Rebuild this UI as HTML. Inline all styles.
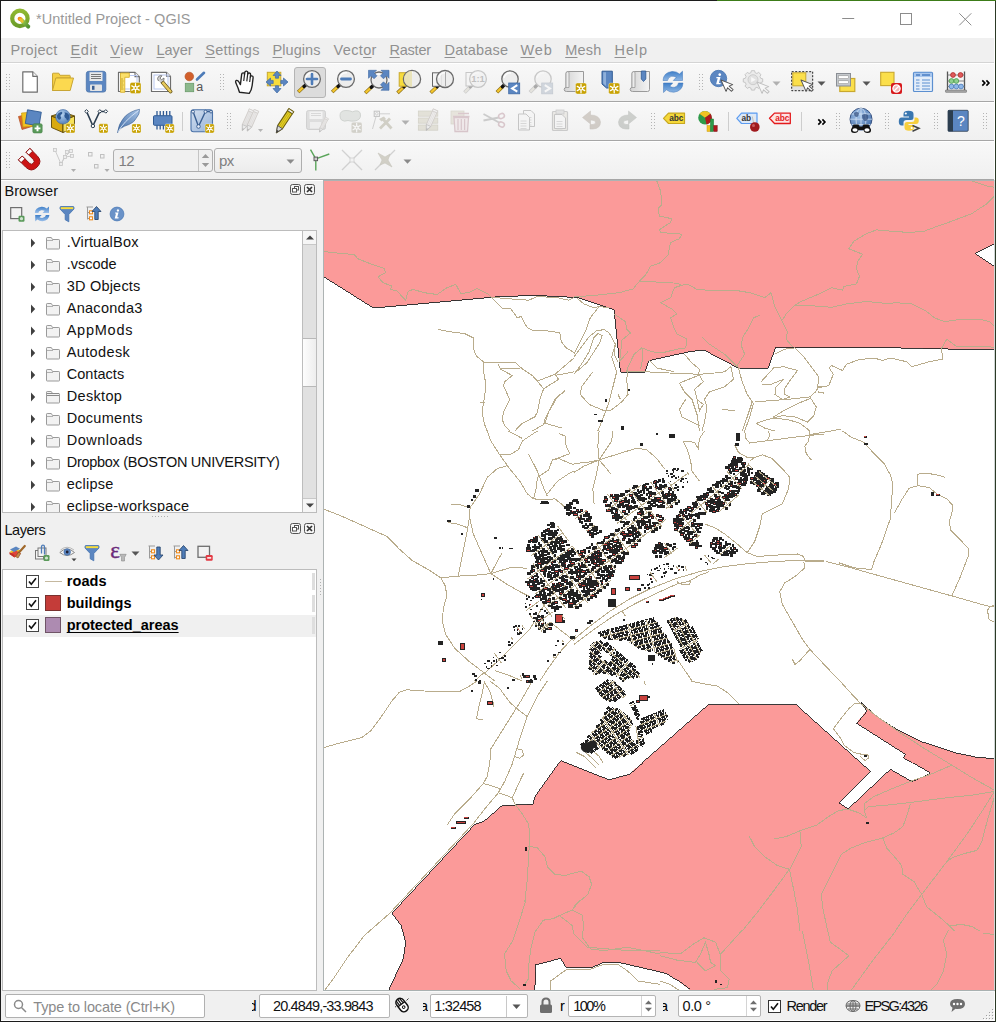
<!DOCTYPE html>
<html><head><meta charset="utf-8"><title>QGIS</title><style>
html,body{margin:0;padding:0}
body{width:996px;height:1022px;overflow:hidden;background:#f0f0f0;position:relative;font-family:"Liberation Sans",sans-serif;font-size:15px;color:#000}
.a{position:absolute}
.t{position:absolute;white-space:nowrap;line-height:1}
svg{position:absolute;overflow:visible}
#title{left:1px;top:1px;width:995px;height:37px;background:#fff}
#menubar{left:1px;top:38px;width:995px;height:24px;background:#f0f0f0}
.m{position:absolute;top:43px;white-space:nowrap;line-height:1;font-size:15.5px;color:#8a8a8a}
.m u{text-decoration-thickness:1px;text-underline-offset:2px}
.tb{position:absolute;left:1px;width:995px;height:38px;background:linear-gradient(#f8f8f8,#f0f0f0)}
.hl{position:absolute;left:1px;width:995px;height:1px}
.white{background:#fff}
.tree{position:absolute;background:#fff;border:1px solid #bcbcbc;box-sizing:border-box}
.bi{position:absolute;left:67px;white-space:nowrap;line-height:1;font-size:15.2px;color:#111}
.sb{position:absolute;background:#fff;border:1px solid #b4b4b4;box-sizing:border-box;border-radius:2px}
</style></head><body>
<div class="a" id="title"></div>
<div class="a" id="menubar"></div>
<div class="tb" style="top:63px;height:38px"></div>
<div class="tb" style="top:103px;height:37px"></div>
<div class="tb" style="top:142px;height:38px"></div>
<div class="hl" style="top:62px;background:#d4d4d4"></div>
<div class="hl white" style="top:63px"></div>
<div class="hl" style="top:101px;background:#a6a6a6"></div>
<div class="hl white" style="top:102px"></div>
<div class="hl" style="top:140px;background:#a6a6a6"></div>
<div class="hl white" style="top:141px"></div>
<div class="hl" style="top:179px;background:#a6a6a6"></div>
<div class="a white" style="left:1px;top:180px;width:322px;height:1px"></div>
<div class="a" style="left:0;top:0;width:717px;height:1px;background:#1c1c1c"></div>
<div class="a" style="left:717px;top:0;width:279px;height:1px;background:#3c7c18"></div>
<div class="a" style="left:0;top:0;width:1px;height:1022px;background:#1c1c1c"></div>
<div class="a" style="left:0;top:1021px;width:996px;height:1px;background:#1c1c1c"></div>
<svg style="left:8px;top:7px" width="24" height="24" viewBox="8 7 24 24">
<defs><linearGradient id="qg" x1="0" y1="0" x2="0" y2="1"><stop offset="0" stop-color="#8fb832"/><stop offset="1" stop-color="#6c9d2a"/></linearGradient>
<linearGradient id="qt" x1="0" y1="0" x2="1" y2="1"><stop offset="0" stop-color="#f0d040"/><stop offset="0.35" stop-color="#93c247"/><stop offset="1" stop-color="#4f9030"/></linearGradient></defs>
<circle cx="19.9" cy="18.4" r="7.700" fill="none" stroke="url(#qg)" stroke-width="4.200"/>
<path d="M20.500 19 L28.200 26.700" stroke="url(#qt)" stroke-width="4" stroke-linecap="round"/>
<circle cx="19.700" cy="18.800" r="2.100" fill="#f08a1c"/>
<path d="M20.200 19.300 L22.500 21.600" stroke="#f0c030" stroke-width="2.200" stroke-linecap="round"/>
</svg>
<div class="t" style="left:36px;top:12.3px;font-size:14.5px;color:#999;font-weight:400;letter-spacing:0.060px;">*Untitled Project - QGIS</div>
<svg style="left:830px;top:1px" width="166" height="37" viewBox="0 0 166 37" fill="none" stroke="#8c8c8c" stroke-width="1"><path d="M12.200 17.500 H24.200"/><rect x="70.500" y="12.500" width="11" height="11"/><path d="M129.300 12.300 L141.300 24.300 M141.300 12.300 L129.300 24.300"/></svg>
<div class="t" style="left:10.5px;top:42.8px;font-size:14.5px;color:#909090;font-weight:400;letter-spacing:0.291px;text-underline-offset:1.5px;">Pro<u>j</u>ect</div>
<div class="t" style="left:70.5px;top:42.8px;font-size:14.5px;color:#909090;font-weight:400;letter-spacing:0.633px;text-underline-offset:1.5px;"><u>E</u>dit</div>
<div class="t" style="left:110.2px;top:42.8px;font-size:14.5px;color:#909090;font-weight:400;letter-spacing:0.571px;text-underline-offset:1.5px;"><u>V</u>iew</div>
<div class="t" style="left:156.5px;top:42.8px;font-size:14.5px;color:#909090;font-weight:400;letter-spacing:-0.024px;text-underline-offset:1.5px;"><u>L</u>ayer</div>
<div class="t" style="left:205.2px;top:42.8px;font-size:14.5px;color:#909090;font-weight:400;letter-spacing:0.256px;text-underline-offset:1.5px;"><u>S</u>ettings</div>
<div class="t" style="left:272.5px;top:42.8px;font-size:14.5px;color:#909090;font-weight:400;letter-spacing:0.056px;text-underline-offset:1.5px;"><u>P</u>lugins</div>
<div class="t" style="left:333.5px;top:42.8px;font-size:14.5px;color:#909090;font-weight:400;letter-spacing:0.352px;text-underline-offset:1.5px;">Vect<u>o</u>r</div>
<div class="t" style="left:389.5px;top:42.8px;font-size:14.5px;color:#909090;font-weight:400;letter-spacing:-0.227px;text-underline-offset:1.5px;"><u>R</u>aster</div>
<div class="t" style="left:444.5px;top:42.8px;font-size:14.5px;color:#909090;font-weight:400;letter-spacing:0.215px;text-underline-offset:1.5px;"><u>D</u>atabase</div>
<div class="t" style="left:520.5px;top:42.8px;font-size:14.5px;color:#909090;font-weight:400;letter-spacing:0.811px;text-underline-offset:1.5px;"><u>W</u>eb</div>
<div class="t" style="left:565.2px;top:42.8px;font-size:14.5px;color:#909090;font-weight:400;letter-spacing:0.239px;text-underline-offset:1.5px;"><u>M</u>esh</div>
<div class="t" style="left:614.5px;top:42.8px;font-size:14.5px;color:#909090;font-weight:400;letter-spacing:0.919px;text-underline-offset:1.5px;"><u>H</u>elp</div>
<div class="a" style="left:6px;top:74px;width:1px;height:17px;background:repeating-linear-gradient(#b4b4b4 0 1px,transparent 1px 3px)"></div>
<div class="a" style="left:9px;top:74px;width:1px;height:17px;background:repeating-linear-gradient(#b4b4b4 0 1px,transparent 1px 3px)"></div>
<svg style="left:18px;top:70px" width="24" height="24" viewBox="0 0 24 24"><path d="M4.800 1.800 H14.800 L19.300 6.300 V22.200 H4.800Z" fill="#fff" stroke="#6e6e6e" stroke-width="1.200" stroke-linejoin="round"/><path d="M14.800 1.800 V6.300 H19.300" fill="#f4f4f4" stroke="#6e6e6e" stroke-width="1.200" stroke-linejoin="round"/></svg>
<svg style="left:50px;top:70px" width="24" height="24" viewBox="0 0 24 24"><path d="M2.500 20.500 V3.800 Q2.500 3.200 3.100 3.200 H8.800 L10 5.300 H19.500 Q20.200 5.300 20.200 6 V8 H6.500 Z" fill="#f5cf45" stroke="#c8a534" stroke-width="1"/><path d="M2.500 20.500 L5.800 8 H23.500 L20.200 20.500Z" fill="#fcd94f" stroke="#c8a534" stroke-width="1" stroke-linejoin="round"/></svg>
<svg style="left:84px;top:70px" width="24" height="24" viewBox="0 0 24 24"><rect x="2.300" y="1.300" width="19.500" height="20.800" rx="2.500" fill="#5b86c1" stroke="#4a72a8" stroke-width="0.800"/><rect x="5.500" y="2.200" width="13" height="8.800" fill="#e9e9e9"/><path d="M7 4.500 H17 M7 6.500 H17 M7 8.500 H17" stroke="#777" stroke-width="1"/><rect x="6" y="14.500" width="12" height="6.500" rx="0.800" fill="#e4e4e4"/><rect x="8" y="15.800" width="2.500" height="4" fill="#3b5f93"/></svg>
<svg style="left:117px;top:70px" width="24" height="24" viewBox="0 0 24 24"><path d="M1.500 2.300 H18 L22.300 6.600 V21.500 H1.500Z" fill="#fff" stroke="#6e6e6e" stroke-width="1.200" stroke-linejoin="round"/><path d="M18 2.300 V6.600 H22.300" fill="#f0f0f0" stroke="#6e6e6e" stroke-width="1.100"/><rect x="4.500" y="5.500" width="15.500" height="13.500" fill="none" stroke="#b9c8f0" stroke-width="1"/><path d="M3.500 3 H12.300 V7.300 H7.800 V22.300 H3.500Z" fill="#fbe06a" stroke="#d8b02c" stroke-width="0.900"/><path d="M4 9 H6 M4 11 H6.500 M4 13 H6 M4 15 H6.500 M4 17 H6 M4 19 H6.500" stroke="#b8941c" stroke-width="0.800"/><rect x="13" y="12.5" width="11" height="11" rx="1.80" fill="#c8a204" stroke="#fff" stroke-opacity="0.550" stroke-width="0.600"/><path d="M18.50 18.00 L18.50 22.30 M18.50 18.00 L18.50 13.70 M18.50 18.00 L22.22 20.15 M18.50 18.00 L14.78 20.15 M18.50 18.00 L14.78 15.85 M18.50 18.00 L22.22 15.85 " stroke="#fff" stroke-width="1.25" stroke-linecap="round"/><circle cx="18.5" cy="18.0" r="2.10" fill="#fff"/><circle cx="18.5" cy="18.0" r="0.95" fill="#c8a204"/></svg>
<svg style="left:150px;top:70px" width="24" height="24" viewBox="0 0 24 24"><path d="M1.500 2.300 H16.500 L20.500 6.300 V21.500 H1.500Z" fill="#fff" stroke="#6e6e6e" stroke-width="1.200" stroke-linejoin="round"/><path d="M16.500 2.300 V6.300 H20.500" fill="#f0f0f0" stroke="#6e6e6e" stroke-width="1.100"/><rect x="4" y="5" width="14" height="14" fill="none" stroke="#b9c8f0" stroke-width="1"/><path d="M8.500 11 Q6.500 8.500 8.500 6.500 Q10 5.200 12 5.800 L10 8 L11.500 9.800 L14 8 Q14.500 10.500 12.500 12 Q11.500 12.500 10.500 12.400" fill="#cfcfcf" stroke="#777" stroke-width="0.900"/><path d="M11 13 L13.500 11 L22 21 Q22.500 22.500 21 23 Q20 23.300 19.300 22.500Z" fill="#e6c85a" stroke="#6b5a20" stroke-width="0.900"/></svg>
<svg style="left:183px;top:70px" width="24" height="24" viewBox="0 0 24 24"><circle cx="6.300" cy="6.500" r="4.300" fill="#d2602c" stroke="#b04c1e" stroke-width="0.600"/><path d="M14 9.500 L21 2.800" stroke="#4e7cb8" stroke-width="2.600" stroke-linecap="round"/><rect x="2.300" y="13.300" width="8.400" height="8.400" fill="#8cb88c" stroke="#6a9c6a" stroke-width="0.800"/><text x="13.200" y="21.300" font-family="Liberation Sans" font-size="12.500" fill="#555">a</text></svg>
<div class="a" style="left:220px;top:74px;width:1px;height:17px;background:repeating-linear-gradient(#b4b4b4 0 1px,transparent 1px 3px)"></div>
<div class="a" style="left:223px;top:74px;width:1px;height:17px;background:repeating-linear-gradient(#b4b4b4 0 1px,transparent 1px 3px)"></div>
<svg style="left:232.5px;top:69.5px" width="24" height="24" viewBox="0 0 24 24"><g transform="translate(12 12) rotate(7) scale(1.06) translate(-11.500 -12.300)"><path d="M7.500 22.500 Q6 19 3.500 15 Q2 12.500 3.200 11.800 Q4.600 11.200 6 13.200 L7.500 15.300 V5.500 Q7.500 4 8.900 4 Q10.200 4 10.200 5.500 V3.500 Q10.200 2 11.700 2 Q13.100 2 13.100 3.500 V4.800 Q13.100 3.400 14.500 3.400 Q15.900 3.400 15.900 4.900 V7 Q15.900 5.800 17.200 5.800 Q18.600 5.800 18.600 7.300 V15 Q18.600 19 16.800 22.500Z" fill="#fff" stroke="#222" stroke-width="1.300" stroke-linejoin="round"/><path d="M10.200 5.500 V11.500 M13.100 4.800 V11.500 M15.900 7 V11.800" stroke="#222" stroke-width="1.100" fill="none"/></g></svg>
<svg style="left:265px;top:70px" width="24" height="24" viewBox="0 0 24 24"><rect x="2.300" y="2.300" width="13.500" height="13.500" fill="#f7dc3c" stroke="#c9a82e" stroke-width="1"/><g fill="#5b86c1" stroke="#3f6aa5" stroke-width="0.700" stroke-linejoin="round"><path d="M12 1 L16 5.500 H13.600 V8.200 H10.400 V5.500 H8Z"/><path d="M12 23 L16 18.500 H13.600 V15.800 H10.400 V18.500 H8Z"/><path d="M1 12 L5.500 8 V10.400 H8.200 V13.600 H5.500 V16Z"/><path d="M23 12 L18.500 8 V10.400 H15.800 V13.600 H18.500 V16Z"/></g></svg>
<div class="a" style="left:294px;top:67px;width:32px;height:31px;box-sizing:border-box;background:#dcdcdc;border:1px solid #b4b4b4;border-radius:3px"></div>
<svg style="left:296.3px;top:65.4px" width="32" height="32" viewBox="0 0 32 32"><path d="M8.0 21.5 L2.2 27.0" stroke="#8a6d14" stroke-width="3.600" stroke-linecap="butt"/><path d="M8.0 21.5 L2.6 26.6" stroke="#f4c62e" stroke-width="2.300" stroke-linecap="butt"/><path d="M9.7 20.0 L8.0 21.5" stroke="#111" stroke-width="3.400" stroke-linecap="round"/><circle cx="16.0" cy="14.0" r="8.4" fill="#ececec" fill-opacity="0.920" stroke="#6a6a6a" stroke-width="1.300"/><path d="M9.8 13.0 A6.2 6.2 0 0 1 17.0 7.8" fill="none" stroke="#fff" stroke-width="1.600" opacity="0.800"/><path d="M11.0 14.0 H21.0 M16.0 9.0 V19.0" stroke="#4e7cb8" stroke-width="2.600" stroke-linecap="round"/></svg>
<svg style="left:329.5px;top:65.4px" width="32" height="32" viewBox="0 0 32 32"><path d="M8.0 21.5 L2.2 27.0" stroke="#8a6d14" stroke-width="3.600" stroke-linecap="butt"/><path d="M8.0 21.5 L2.6 26.6" stroke="#f4c62e" stroke-width="2.300" stroke-linecap="butt"/><path d="M9.7 20.0 L8.0 21.5" stroke="#111" stroke-width="3.400" stroke-linecap="round"/><circle cx="16.0" cy="14.0" r="8.4" fill="#ececec" fill-opacity="0.920" stroke="#6a6a6a" stroke-width="1.300"/><path d="M9.8 13.0 A6.2 6.2 0 0 1 17.0 7.8" fill="none" stroke="#fff" stroke-width="1.600" opacity="0.800"/><path d="M11.5 14.0 H20.5" stroke="#4e7cb8" stroke-width="2.800" stroke-linecap="round"/></svg>
<svg style="left:362.6px;top:65.7px" width="32" height="32" viewBox="0 0 32 32"><path d="M8.3 21.3 L2.2 27.0" stroke="#8a6d14" stroke-width="3.600" stroke-linecap="butt"/><path d="M8.3 21.3 L2.6 26.6" stroke="#f4c62e" stroke-width="2.300" stroke-linecap="butt"/><path d="M10.0 19.7 L8.3 21.3" stroke="#111" stroke-width="3.400" stroke-linecap="round"/><circle cx="16.0" cy="14.0" r="8.0" fill="#ececec" fill-opacity="0.920" stroke="#6a6a6a" stroke-width="1.300"/><path d="M10.2 13.0 A5.8 5.8 0 0 1 17.0 8.2" fill="none" stroke="#fff" stroke-width="1.600" opacity="0.800"/><g fill="#5b86c1" stroke="#3f6aa5" stroke-width="0.600" stroke-linejoin="round"><path d="M5.5 4.3 h8 l-2.500 2.500 l3 3 l-3 3 l-3 -3 l-2.500 2.500z"/><path d="M26.0 4.3 h-8 l2.500 2.500 l-3 3 l3 3 l3 -3 l2.500 2.500z"/><path d="M26.0 24.3 h-8 l2.500 -2.500 l-3 -3 l3 -3 l3 3 l2.500 -2.500z"/></g></svg>
<svg style="left:396.3px;top:64.6px" width="32" height="32" viewBox="0 0 32 32"><path d="M7.9 21.8 L1.5 27.9" stroke="#8a6d14" stroke-width="3.600" stroke-linecap="butt"/><path d="M7.9 21.8 L1.9 27.5" stroke="#f4c62e" stroke-width="2.300" stroke-linecap="butt"/><path d="M9.6 20.2 L7.9 21.8" stroke="#111" stroke-width="3.400" stroke-linecap="round"/><rect x="3.2" y="7.7" width="9" height="13.500" fill="#f7dc3c" stroke="#c9a82e" stroke-width="1"/><circle cx="16.0" cy="14.0" r="8.6" fill="#ececec" fill-opacity="0.920" stroke="#6a6a6a" stroke-width="1.300"/><path d="M9.6 13.0 A6.4 6.4 0 0 1 17.0 7.6" fill="none" stroke="#fff" stroke-width="1.600" opacity="0.800"/><path d="M16.0 6.0 A8 8 0 0 0 16.0 22.0 Z" fill="#e8e0b0" opacity="0.850"/></svg>
<svg style="left:429.2px;top:64.7px" width="32" height="32" viewBox="0 0 32 32"><path d="M8.0 21.7 L1.7 27.8" stroke="#8a6d14" stroke-width="3.600" stroke-linecap="butt"/><path d="M8.0 21.7 L2.1 27.4" stroke="#f4c62e" stroke-width="2.300" stroke-linecap="butt"/><path d="M9.7 20.1 L8.0 21.7" stroke="#111" stroke-width="3.400" stroke-linecap="round"/><rect x="3.5" y="7.8" width="9" height="13.500" fill="#f4f4f4" stroke="#666" stroke-width="1"/><circle cx="16.0" cy="14.0" r="8.5" fill="#ececec" fill-opacity="0.920" stroke="#6a6a6a" stroke-width="1.300"/><path d="M9.7 13.0 A6.3 6.3 0 0 1 17.0 7.7" fill="none" stroke="#fff" stroke-width="1.600" opacity="0.800"/><path d="M16.5 7.0 V21.0" stroke="#aaa" stroke-width="1"/></svg>
<svg style="left:461.5px;top:65px" width="32" height="32" viewBox="0 0 32 32" opacity="0.32"><path d="M8.2 21.8 L2.5 27.5" stroke="#777" stroke-width="3.600" stroke-linecap="butt"/><path d="M8.2 21.8 L2.9 27.1" stroke="#c8c4b4" stroke-width="2.300" stroke-linecap="butt"/><path d="M9.8 20.2 L8.2 21.8" stroke="#111" stroke-width="3.400" stroke-linecap="round"/><rect x="4.0" y="7.5" width="9" height="13.500" fill="#f4f4f4" stroke="#666" stroke-width="1"/><circle cx="16.0" cy="14.0" r="8.4" fill="#ececec" fill-opacity="0.920" stroke="#6a6a6a" stroke-width="1.300"/><path d="M9.8 13.0 A6.2 6.2 0 0 1 17.0 7.8" fill="none" stroke="#fff" stroke-width="1.600" opacity="0.800"/><text x="16.0" y="17.4" font-family="Liberation Sans" font-weight="700" font-size="9.500" fill="#555" text-anchor="middle">1:1</text></svg>
<svg style="left:494.3px;top:65px" width="32" height="32" viewBox="0 0 32 32"><path d="M8.4 21.7 L2.9 27.3" stroke="#8a6d14" stroke-width="3.600" stroke-linecap="butt"/><path d="M8.4 21.7 L3.3 26.9" stroke="#f4c62e" stroke-width="2.300" stroke-linecap="butt"/><path d="M10.0 20.1 L8.4 21.7" stroke="#111" stroke-width="3.400" stroke-linecap="round"/><circle cx="16.0" cy="14.0" r="8.2" fill="#ececec" fill-opacity="0.920" stroke="#6a6a6a" stroke-width="1.300"/><path d="M10.0 13.0 A6.0 6.0 0 0 1 17.0 8.0" fill="none" stroke="#fff" stroke-width="1.600" opacity="0.800"/><rect x="14.7" y="18.0" width="11" height="10.800" fill="#5b86c1" stroke="#3f6aa5" stroke-width="0.800"/><path d="M23.3 20.2 l-5.200 3.200 l5.200 3.200" fill="none" stroke="#fff" stroke-width="2"/></svg>
<svg style="left:527.3px;top:65px" width="32" height="32" viewBox="0 0 32 32" opacity="0.32"><path d="M8.4 21.7 L2.9 27.3" stroke="#777" stroke-width="3.600" stroke-linecap="butt"/><path d="M8.4 21.7 L3.3 26.9" stroke="#c8c4b4" stroke-width="2.300" stroke-linecap="butt"/><path d="M10.0 20.1 L8.4 21.7" stroke="#111" stroke-width="3.400" stroke-linecap="round"/><circle cx="16.0" cy="14.0" r="8.2" fill="#ececec" fill-opacity="0.920" stroke="#6a6a6a" stroke-width="1.300"/><path d="M10.0 13.0 A6.0 6.0 0 0 1 17.0 8.0" fill="none" stroke="#fff" stroke-width="1.600" opacity="0.800"/><rect x="14.7" y="18.0" width="11" height="10.800" fill="#8a9ab0" stroke="#6a7a90" stroke-width="0.800"/><path d="M17.8 20.2 l5.200 3.200 l-5.200 3.200" fill="none" stroke="#fff" stroke-width="2"/></svg>
<svg style="left:563px;top:69.5px" width="24" height="24" viewBox="0 0 24 24"><defs><linearGradient id="sg1" x1="0" x2="1"><stop offset="0" stop-color="#d4d4d4"/><stop offset="1" stop-color="#f4f4f4"/></linearGradient></defs><path d="M5 1.500 H20.500 V19.500 Q20.500 21.500 18.500 21.500 H3.500 Q1.200 21.500 1.200 19.500 Q1.200 17.500 3 17.500 V3.500 Q3 1.500 5 1.500Z" fill="url(#sg1)" stroke="#9a9a9a" stroke-width="1"/><path d="M5 1.500 Q3 1.500 3 3.500 V17.500 H6 V3 Q6 1.500 5 1.500Z" fill="#ececec" stroke="#9a9a9a" stroke-width="0.800"/><rect x="12.5" y="13" width="11" height="11" rx="1.80" fill="#c8a204" stroke="#fff" stroke-opacity="0.550" stroke-width="0.600"/><path d="M18.00 18.50 L18.00 22.80 M18.00 18.50 L18.00 14.20 M18.00 18.50 L21.72 20.65 M18.00 18.50 L14.28 20.65 M18.00 18.50 L14.28 16.35 M18.00 18.50 L21.72 16.35 " stroke="#fff" stroke-width="1.25" stroke-linecap="round"/><circle cx="18.0" cy="18.5" r="2.10" fill="#fff"/><circle cx="18.0" cy="18.5" r="0.95" fill="#c8a204"/></svg>
<svg style="left:596px;top:69.5px" width="24" height="24" viewBox="0 0 24 24"><path d="M6 1.200 H16.300 V18 H10.500 L6 14Z" fill="#5b86c1" stroke="#2f5a94" stroke-width="1"/><path d="M7.200 2.300 H10 V16 L7.200 13.500Z" fill="#8fb0da"/><rect x="12.7" y="13" width="11" height="11" rx="1.80" fill="#c8a204" stroke="#fff" stroke-opacity="0.550" stroke-width="0.600"/><path d="M18.20 18.50 L18.20 22.80 M18.20 18.50 L18.20 14.20 M18.20 18.50 L21.92 20.65 M18.20 18.50 L14.48 20.65 M18.20 18.50 L14.48 16.35 M18.20 18.50 L21.92 16.35 " stroke="#fff" stroke-width="1.25" stroke-linecap="round"/><circle cx="18.2" cy="18.5" r="2.10" fill="#fff"/><circle cx="18.2" cy="18.5" r="0.95" fill="#c8a204"/></svg>
<svg style="left:629px;top:69.5px" width="24" height="24" viewBox="0 0 24 24"><defs><linearGradient id="sg2" x1="0" x2="1"><stop offset="0" stop-color="#d4d4d4"/><stop offset="1" stop-color="#f4f4f4"/></linearGradient></defs><path d="M5 1.500 H20.500 V19.500 Q20.500 21.500 18.500 21.500 H3.500 Q1.200 21.500 1.200 19.500 Q1.200 17.500 3 17.500 V3.500 Q3 1.500 5 1.500Z" fill="url(#sg2)" stroke="#9a9a9a" stroke-width="1"/><path d="M5 1.500 Q3 1.500 3 3.500 V17.500 H6 V3 Q6 1.500 5 1.500Z" fill="#ececec" stroke="#9a9a9a" stroke-width="0.800"/><path d="M12.300 1 H16.800 V9 L14.500 11.500 L12.300 9Z" fill="#5b86c1" stroke="#2f5a94" stroke-width="0.800"/></svg>
<svg style="left:661px;top:70px" width="24" height="24" viewBox="0 0 24 24"><defs><linearGradient id="rf" x1="0" y1="0" x2="0" y2="1"><stop offset="0" stop-color="#3f7fc8"/><stop offset="1" stop-color="#8db6e4"/></linearGradient></defs><path d="M2 10.500 Q2.500 2.500 11 1.500 Q15.500 1.200 18.500 4 L21.500 1.200 V10.500 H12.300 L15.300 7.300 Q13 5.800 10.500 6.300 Q7 7.200 6.500 10.500Z" fill="url(#rf)" stroke="#3a73b8" stroke-width="0.500"/><path d="M22 13 Q21.500 21 13 22.200 Q8.500 22.500 5.500 19.800 L2.500 22.500 V13 H11.700 L8.700 16.300 Q11 17.800 13.500 17.300 Q17 16.500 17.500 13Z" fill="url(#rf)" stroke="#3a73b8" stroke-width="0.500"/></svg>
<div class="a" style="left:699px;top:74px;width:1px;height:17px;background:repeating-linear-gradient(#b4b4b4 0 1px,transparent 1px 3px)"></div>
<div class="a" style="left:702px;top:74px;width:1px;height:17px;background:repeating-linear-gradient(#b4b4b4 0 1px,transparent 1px 3px)"></div>
<svg style="left:710px;top:70px" width="24" height="24" viewBox="0 0 24 24"><circle cx="8.500" cy="8.500" r="8.200" fill="#5b86c1" stroke="#4372b0" stroke-width="0.800"/><path d="M9.800 3.200 a1.400 1.400 0 1 1 -0.100 0z M6.500 7 h4 l-1.600 6 h1.800 l-0.300 1.300 h-4.300 l1.600 -6 h-1.500z" fill="#fff"/><g transform="translate(11 10) rotate(-24) scale(0.86) translate(-11 -10)"><path d="M11 10 v14.500 l3.300 -3.100 l2.600 5.600 l2.400 -1.100 l-2.600 -5.500 h4.600z" fill="#fff" stroke="#555" stroke-width="1.100" stroke-linejoin="round"/></g></svg>
<svg style="left:744px;top:70px" width="24" height="24" viewBox="0 0 24 24" opacity="0.32"><g transform="translate(9 9.700)"><path d="M-1.600 -9 h3.200 l0.500 2 l1.800 0.800 l1.800 -1.100 l2.300 2.300 l-1.100 1.800 l0.800 1.800 l2 0.500 v3.200 l-2 0.500 l-0.800 1.800 l1.100 1.800 l-2.300 2.300 l-1.800 -1.100 l-1.800 0.800 l-0.500 2 h-3.200 l-0.500 -2 l-1.800 -0.800 l-1.800 1.100 l-2.300 -2.300 l1.100 -1.800 l-0.800 -1.800 l-2 -0.500 v-3.200 l2 -0.500 l0.800 -1.800 l-1.100 -1.800 l2.300 -2.300 l1.800 1.100 l1.800 -0.800z" fill="#d8d8d8" stroke="#666" stroke-width="1"/><circle r="5" fill="#bbb" stroke="#666" stroke-width="0.800"/><path d="M-1.800 -2.600 L2.800 0 L-1.800 2.600Z" fill="#fff"/></g><g transform="translate(13 12) rotate(-24) scale(0.86) translate(-13 -12)"><path d="M13 12 v14.500 l3.300 -3.100 l2.600 5.600 l2.400 -1.100 l-2.600 -5.500 h4.600z" fill="#fff" stroke="#555" stroke-width="1.100" stroke-linejoin="round"/></g></svg>
<svg style="left:772.3px;top:80.5px" width="9" height="5" viewBox="0 0 9 5"><path d="M0.500 0.500 H8.500 L4.500 4.800Z" fill="#b0b0b0"/></svg>
<svg style="left:789.5px;top:70px" width="24" height="24" viewBox="0 0 24 24"><rect x="1.700" y="1.700" width="21" height="19" fill="#e2e2e2" stroke="#222" stroke-width="1" stroke-dasharray="2 1.500"/><rect x="2.800" y="2.800" width="13" height="13" fill="#fbdf4b" stroke="#c9a82e" stroke-width="1"/><g transform="translate(11 10) rotate(-24) scale(0.86) translate(-11 -10)"><path d="M11 10 v14.500 l3.300 -3.100 l2.600 5.600 l2.400 -1.100 l-2.600 -5.500 h4.600z" fill="#fff" stroke="#555" stroke-width="1.100" stroke-linejoin="round"/></g></svg>
<svg style="left:817.3px;top:80.5px" width="9" height="5" viewBox="0 0 9 5"><path d="M0.500 0.500 H8.500 L4.500 4.800Z" fill="#555"/></svg>
<svg style="left:834px;top:70px" width="24" height="24" viewBox="0 0 24 24"><rect x="5.800" y="8.500" width="15" height="13" fill="#fbdf4b" stroke="#c9a82e" stroke-width="1.200"/><rect x="2.500" y="3.500" width="14" height="12.500" fill="#c4c8cc" stroke="#8a8e94" stroke-width="1"/><rect x="4.500" y="5.800" width="10" height="2.800" fill="#fff" stroke="#888" stroke-width="0.500"/><rect x="4.500" y="10.800" width="10" height="2.800" fill="#fff" stroke="#888" stroke-width="0.500"/></svg>
<svg style="left:862.3px;top:80.5px" width="9" height="5" viewBox="0 0 9 5"><path d="M0.500 0.500 H8.500 L4.500 4.800Z" fill="#555"/></svg>
<svg style="left:879px;top:70px" width="24" height="24" viewBox="0 0 24 24"><rect x="1.700" y="2.300" width="13.300" height="13.300" fill="#fbdf4b" stroke="#c9a82e" stroke-width="1.100"/><rect x="12" y="13" width="11" height="11" rx="2" fill="#d7191c"/><circle cx="17.500" cy="18.500" r="3.600" fill="#f4b6b6" stroke="#fff" stroke-width="1.300"/><path d="M15 21 L20 16" stroke="#fff" stroke-width="1.300"/></svg>
<svg style="left:911px;top:70px" width="24" height="24" viewBox="0 0 24 24"><rect x="2.500" y="2.300" width="19" height="19.200" rx="1" fill="#e3edf9" stroke="#5b8fd0" stroke-width="1.200"/><rect x="3" y="2.800" width="18" height="4.200" fill="#a9c7ee"/><path d="M5 5 H9 M11 5 H19" stroke="#4a7fc4" stroke-width="1.600"/><path d="M5 10 H8.500 M11 10 H19 M5 13 H8.500 M11 13 H19 M5 16 H8.500 M11 16 H19 M5 19 H8.500 M11 19 H19" stroke="#5b8fd0" stroke-width="1"/></svg>
<svg style="left:944px;top:70px" width="24" height="24" viewBox="0 0 24 24"><path d="M3.500 1.500 V20 M20.500 1.500 V20" stroke="#555" stroke-width="1.300"/><path d="M3.500 5 H20.500 M3.500 11 H20.500 M3.500 16.500 H20.500" stroke="#777" stroke-width="0.900"/><rect x="1.500" y="20" width="21" height="2.300" rx="0.500" fill="#aaa" stroke="#666" stroke-width="0.600"/><g stroke-width="0.800"><circle cx="9" cy="5" r="2.400" fill="#e05a5a" stroke="#b02a2a"/><circle cx="16.500" cy="5" r="2.400" fill="#e05a5a" stroke="#b02a2a"/><circle cx="7.500" cy="11" r="2.400" fill="#8fd08f" stroke="#4a9a4a"/><circle cx="12.300" cy="11" r="2.400" fill="#8fd08f" stroke="#4a9a4a"/><circle cx="7.500" cy="16.500" r="2.400" fill="#8fb8e8" stroke="#4a7ab8"/><circle cx="12.300" cy="16.500" r="2.400" fill="#8fb8e8" stroke="#4a7ab8"/><circle cx="17" cy="16.500" r="2.400" fill="#8fb8e8" stroke="#4a7ab8"/></g></svg>
<svg style="left:981.3px;top:78.5px" width="10" height="8" viewBox="0 0 10 8" fill="none" stroke-linejoin="miter"><path d="M1.300 1.400 L3.800 4 L1.300 6.600 M5.400 1.400 L7.900 4 L5.400 6.600" stroke="#fff" stroke-width="3.200" opacity="0.800"/><path d="M1.300 1.400 L3.800 4 L1.300 6.600 M5.400 1.400 L7.900 4 L5.400 6.600" stroke="#000" stroke-width="1.700"/></svg>
<div class="a" style="left:6px;top:113px;width:1px;height:17px;background:repeating-linear-gradient(#b4b4b4 0 1px,transparent 1px 3px)"></div>
<div class="a" style="left:9px;top:113px;width:1px;height:17px;background:repeating-linear-gradient(#b4b4b4 0 1px,transparent 1px 3px)"></div>
<svg style="left:18px;top:109px" width="24" height="24" viewBox="0 0 24 24"><path d="M0.500 7.500 L12 4.500 L15.500 17 L4 20.500Z" fill="#d9662c" stroke="#b04c1e" stroke-width="0.700"/><path d="M3.500 4 L16 3 L17 17 L5 18Z" fill="#f2c322" stroke="#c99a10" stroke-width="0.700"/><path d="M9.500 0.800 L23.300 3.200 L21 17 L7.300 14.500Z" fill="#5b86c1" stroke="#2f5a94" stroke-width="0.900"/><rect x="14.800" y="14.700" width="9.400" height="9.300" rx="1.500" fill="#5a9a5a" stroke="#3f7a3f" stroke-width="0.500"/><path d="M19.500 16.500 V22.200 M16.600 19.350 H22.400" stroke="#fff" stroke-width="1.900"/></svg>
<svg style="left:51px;top:109px" width="24" height="24" viewBox="0 0 24 24"><defs><radialGradient id="gl" cx="40%" cy="35%" r="70%"><stop offset="0" stop-color="#b8d4f0"/><stop offset="1" stop-color="#4e7cb8"/></radialGradient></defs><path d="M0.500 7 L12 11.500 V23.500 L0.500 18.500Z" fill="#d9aa10" stroke="#5a4608" stroke-width="0.900" stroke-linejoin="round"/><path d="M12 11.500 L23.500 7 V18.500 L12 23.500Z" fill="#f7e25a" stroke="#5a4608" stroke-width="0.900" stroke-linejoin="round"/><path d="M0.500 7 L12 3 L23.500 7 L12 11.500Z" fill="#b8900c" stroke="#5a4608" stroke-width="0.900"/><circle cx="12" cy="7.800" r="7.300" fill="url(#gl)" stroke="#3f6aa5" stroke-width="0.600"/><path d="M6 6.500 q1 -3 4.500 -3.800 q1.500 0.800 0.500 2.300 q-2 0.500 -1.500 2.500 q1.500 1 0 2.800 q-1.500 1 -2.500 -0.300 q-1.500 -1.500 -1 -3.500z M13.500 3.300 q3 0.200 4.800 3 q0.500 3 -1 5 q-1.500 0.500 -2 -1.500 q-2 -1 -2 -3 q1.500 -1 0.200 -3.500z" fill="#2f5a94"/><path d="M4.600 9.200 L12 12 L19.400 9.200 L19.400 12 L12 15 L4.600 12Z" fill="#d9aa10" opacity="0"/><rect x="14.7" y="14.6" width="9.3" height="9.3" rx="1.52" fill="#c8a204" stroke="#fff" stroke-opacity="0.550" stroke-width="0.600"/><path d="M19.35 19.25 L19.35 22.89 M19.35 19.25 L19.35 15.61 M19.35 19.25 L22.50 21.07 M19.35 19.25 L16.20 21.07 M19.35 19.25 L16.20 17.43 M19.35 19.25 L22.50 17.43 " stroke="#fff" stroke-width="1.07" stroke-linecap="round"/><circle cx="19.35" cy="19.25" r="1.78" fill="#fff"/><circle cx="19.35" cy="19.25" r="0.80" fill="#c8a204"/></svg>
<svg style="left:84px;top:109px" width="24" height="24" viewBox="0 0 24 24"><path d="M2.500 2.400 L8.900 16.900 L15.800 2.400 H21.800" fill="none" stroke="#2c3e50" stroke-width="1.500" stroke-linejoin="round"/><g fill="#fff" stroke="#2c3e50" stroke-width="1"><path d="M2.500 0.600 l1.800 1.800 l-1.800 1.800 l-1.800 -1.800z M15.800 0.600 l1.800 1.800 l-1.800 1.800 l-1.800 -1.800z M21.800 0.600 l1.800 1.800 l-1.800 1.800 l-1.800 -1.800z"/><circle cx="8.900" cy="17" r="1.700"/></g><rect x="14.9" y="14.8" width="9.1" height="9.1" rx="1.49" fill="#c8a204" stroke="#fff" stroke-opacity="0.550" stroke-width="0.600"/><path d="M19.45 19.35 L19.45 22.91 M19.45 19.35 L19.45 15.79 M19.45 19.35 L22.53 21.13 M19.45 19.35 L16.37 21.13 M19.45 19.35 L16.37 17.57 M19.45 19.35 L22.53 17.57 " stroke="#fff" stroke-width="1.05" stroke-linecap="round"/><circle cx="19.45" cy="19.35" r="1.74" fill="#fff"/><circle cx="19.45" cy="19.35" r="0.79" fill="#c8a204"/></svg>
<svg style="left:117px;top:109px" width="24" height="24" viewBox="0 0 24 24"><defs><linearGradient id="ft" x1="0" y1="1" x2="1" y2="0"><stop offset="0" stop-color="#3f6aa5"/><stop offset="1" stop-color="#a8c4e6"/></linearGradient></defs><path d="M0.500 23.500 Q1.500 15 7 8.500 Q13 2 22.500 0.300 Q23 5 19 9.500 Q17.500 13 12 15.500 Q7 17 3.500 19.500 Q2 21 0.800 23.600Z" fill="url(#ft)" stroke="#3a5f92" stroke-width="0.600"/><path d="M1 23 Q6 13 21.500 1.500" fill="none" stroke="#dbe8f8" stroke-width="0.900"/><rect x="14.9" y="14.9" width="9.1" height="9.1" rx="1.49" fill="#c8a204" stroke="#fff" stroke-opacity="0.550" stroke-width="0.600"/><path d="M19.45 19.45 L19.45 23.01 M19.45 19.45 L19.45 15.89 M19.45 19.45 L22.53 21.23 M19.45 19.45 L16.37 21.23 M19.45 19.45 L16.37 17.67 M19.45 19.45 L22.53 17.67 " stroke="#fff" stroke-width="1.05" stroke-linecap="round"/><circle cx="19.45" cy="19.45" r="1.74" fill="#fff"/><circle cx="19.45" cy="19.45" r="0.79" fill="#c8a204"/></svg>
<svg style="left:150px;top:109px" width="24" height="24" viewBox="0 0 24 24"><path d="M7 2 V6.700 M10.200 2 V6.700 M13.400 2 V6.700 M16.600 2 V6.700 M19.800 2 V6.700 M7 16.300 V20.500 M10.200 16.300 V20.500 M13.400 16.300 V20.500" stroke="#2f5a94" stroke-width="1.300"/><rect x="3.500" y="6.700" width="18.500" height="9.600" rx="1" fill="#5b86c1" stroke="#2f5a94" stroke-width="1"/><rect x="15.1" y="14.9" width="9.1" height="9.1" rx="1.49" fill="#c8a204" stroke="#fff" stroke-opacity="0.550" stroke-width="0.600"/><path d="M19.65 19.45 L19.65 23.01 M19.65 19.45 L19.65 15.89 M19.65 19.45 L22.73 21.23 M19.65 19.45 L16.57 21.23 M19.65 19.45 L16.57 17.67 M19.65 19.45 L22.73 17.67 " stroke="#fff" stroke-width="1.05" stroke-linecap="round"/><circle cx="19.65" cy="19.45" r="1.74" fill="#fff"/><circle cx="19.65" cy="19.45" r="0.79" fill="#c8a204"/></svg>
<div class="a" style="left:182px;top:112px;width:1px;height:19px;background:#cdcdcd"></div>
<svg style="left:190px;top:109px" width="24" height="24" viewBox="0 0 24 24"><defs><linearGradient id="vl" x1="0" y1="0" x2="1" y2="1"><stop offset="0" stop-color="#d4e0f0"/><stop offset="1" stop-color="#95b2d8"/></linearGradient></defs><rect x="1" y="0.800" width="21.500" height="22" rx="2.500" fill="url(#vl)" stroke="#4a72a8" stroke-width="1.100"/><path d="M3 2.500 L8.500 17.500 L15.500 2.500 H21" fill="none" stroke="#3a5f92" stroke-width="1.400"/><g fill="#e8eef8" stroke="#3a5f92" stroke-width="0.900"><circle cx="3" cy="2.700" r="1.500"/><circle cx="15.500" cy="2.700" r="1.500"/><circle cx="21" cy="2.700" r="1.300"/><circle cx="8.500" cy="17.500" r="1.800"/></g><rect x="15.1" y="14.9" width="9.1" height="9.1" rx="1.49" fill="#c8a204" stroke="#fff" stroke-opacity="0.550" stroke-width="0.600"/><path d="M19.65 19.45 L19.65 23.01 M19.65 19.45 L19.65 15.89 M19.65 19.45 L22.73 21.23 M19.65 19.45 L16.57 21.23 M19.65 19.45 L16.57 17.67 M19.65 19.45 L22.73 17.67 " stroke="#fff" stroke-width="1.05" stroke-linecap="round"/><circle cx="19.65" cy="19.45" r="1.74" fill="#fff"/><circle cx="19.65" cy="19.45" r="0.79" fill="#c8a204"/></svg>
<div class="a" style="left:227px;top:113px;width:1px;height:17px;background:repeating-linear-gradient(#b4b4b4 0 1px,transparent 1px 3px)"></div>
<div class="a" style="left:230px;top:113px;width:1px;height:17px;background:repeating-linear-gradient(#b4b4b4 0 1px,transparent 1px 3px)"></div>
<svg style="left:239px;top:109px" width="24" height="24" viewBox="0 0 24 24" opacity="0.32"><g transform="translate(8 11) rotate(24)"><path d="M-2.400 -11 H2.400 V6 L0 11.500 L-2.400 6Z" fill="#cfc8c4" stroke="#8a8078" stroke-width="0.900" stroke-linejoin="round"/><path d="M-2.400 -9 H2.400" stroke="#8a8078" stroke-width="0.900"/><path d="M-0.800 -9 V6 M0.800 -9 V6" stroke="#aaa" stroke-width="0.600"/><path d="M-2.400 6 L0 11.500 L2.400 6Z" fill="#d8d8d8" stroke="#555" stroke-width="0.700"/><path d="M-0.900 9.300 L0 11.500 L0.900 9.300Z" fill="#333"/><path d="M-2.400 -11 H2.400 V-9 H-2.400Z" fill="#eee" stroke="#8a8078" stroke-width="0.700"/></g><g transform="translate(13 11.5) rotate(24)"><path d="M-2.400 -11 H2.400 V6 L0 11.500 L-2.400 6Z" fill="#d8d0cc" stroke="#8a8078" stroke-width="0.900" stroke-linejoin="round"/><path d="M-2.400 -9 H2.400" stroke="#8a8078" stroke-width="0.900"/><path d="M-0.800 -9 V6 M0.800 -9 V6" stroke="#aaa" stroke-width="0.600"/><path d="M-2.400 6 L0 11.500 L2.400 6Z" fill="#d8d8d8" stroke="#555" stroke-width="0.700"/><path d="M-0.900 9.300 L0 11.500 L0.900 9.300Z" fill="#333"/><path d="M-2.400 -11 H2.400 V-9 H-2.400Z" fill="#eee" stroke="#8a8078" stroke-width="0.700"/></g><path d="M19 20 h5 l-2.500 3z" fill="#333"/></svg>
<svg style="left:272px;top:109px" width="24" height="24" viewBox="0 0 24 24"><g transform="translate(12 12.200) scale(1.2) translate(-12 -12.200)"><g transform="translate(12 12.2) rotate(33.5)"><path d="M-2.400 -11 H2.400 V6 L0 11.500 L-2.400 6Z" fill="#e6d022" stroke="#6a5c10" stroke-width="0.900" stroke-linejoin="round"/><path d="M-2.400 -9 H2.400" stroke="#6a5c10" stroke-width="0.900"/><path d="M-0.800 -9 V6 M0.800 -9 V6" stroke="#b8a418" stroke-width="0.600"/><path d="M-2.400 6 L0 11.500 L2.400 6Z" fill="#d8d8d8" stroke="#555" stroke-width="0.700"/><path d="M-0.900 9.300 L0 11.500 L0.900 9.300Z" fill="#333"/><path d="M-2.400 -11 H2.400 V-9 H-2.400Z" fill="#eee" stroke="#6a5c10" stroke-width="0.700"/></g></g></svg>
<svg style="left:304px;top:109px" width="24" height="24" viewBox="0 0 24 24" opacity="0.32"><rect x="2.500" y="1.500" width="19" height="19" rx="2" fill="#b0b0b0" stroke="#777" stroke-width="0.800"/><rect x="5.500" y="2.500" width="13" height="7.500" fill="#eee"/><path d="M7 4.500 H17 M7 6.500 H17" stroke="#888" stroke-width="0.800"/><rect x="6" y="13" width="11" height="6.500" fill="#e4e4e4"/><g transform="translate(6 5) scale(0.7)"><g transform="translate(19 15.5) rotate(28)"><path d="M-2.400 -11 H2.400 V6 L0 11.500 L-2.400 6Z" fill="#d8d0cc" stroke="#8a8078" stroke-width="0.900" stroke-linejoin="round"/><path d="M-2.400 -9 H2.400" stroke="#8a8078" stroke-width="0.900"/><path d="M-0.800 -9 V6 M0.800 -9 V6" stroke="#aaa" stroke-width="0.600"/><path d="M-2.400 6 L0 11.500 L2.400 6Z" fill="#d8d8d8" stroke="#555" stroke-width="0.700"/><path d="M-0.900 9.300 L0 11.500 L0.900 9.300Z" fill="#333"/><path d="M-2.400 -11 H2.400 V-9 H-2.400Z" fill="#eee" stroke="#8a8078" stroke-width="0.700"/></g></g></svg>
<svg style="left:338px;top:109px" width="24" height="24" viewBox="0 0 24 24" opacity="0.32"><path d="M2 6.500 Q2 1.500 8 1.500 Q12 1.500 14.500 2.800 Q17 1.500 20 2 Q23 3 22.500 7 Q22 11 17 12 Q13 12.500 10 11.500 Q6 13 3.500 11 Q2 9.500 2 6.500Z" fill="#b8c0b8" stroke="#7a847a" stroke-width="0.900"/><rect x="13.3" y="13.3" width="10.7" height="10.7" rx="1.75" fill="#8f8a74" stroke="#fff" stroke-opacity="0.550" stroke-width="0.600"/><path d="M18.65 18.65 L18.65 22.83 M18.65 18.65 L18.65 14.47 M18.65 18.65 L22.27 20.74 M18.65 18.65 L15.03 20.74 M18.65 18.65 L15.03 16.56 M18.65 18.65 L22.27 16.56 " stroke="#fff" stroke-width="1.22" stroke-linecap="round"/><circle cx="18.65" cy="18.65" r="2.04" fill="#fff"/><circle cx="18.65" cy="18.65" r="0.92" fill="#8f8a74"/></svg>
<svg style="left:371px;top:109px" width="24" height="24" viewBox="0 0 24 24" opacity="0.32"><rect x="3.200" y="2.200" width="5.200" height="5.200" fill="#fff" stroke="#555" stroke-width="1"/><circle cx="5.800" cy="4.800" r="1.300" fill="none" stroke="#555" stroke-width="0.700"/><path d="M8.500 4.800 H19 M5 7.500 L1.500 20" stroke="#777" stroke-width="0.900"/><path d="M9 19.500 L19 9.500 M11 9 L20.500 19.500" stroke="#8a8468" stroke-width="2.800"/><path d="M8 10 L13 7.500 L15 10 L10.500 12.500Z" fill="#8a8468"/></svg>
<svg style="left:400.5px;top:119.5px" width="9" height="5" viewBox="0 0 9 5"><path d="M0.500 0.500 H8.500 L4.500 4.800Z" fill="#b0b0b0"/></svg>
<svg style="left:416px;top:109px" width="24" height="24" viewBox="0 0 24 24" opacity="0.32"><g fill="#bdb89c" stroke="#8a8468" stroke-width="0.700"><rect x="2.300" y="2" width="19.500" height="5.200"/><rect x="2.300" y="9" width="19.500" height="5.200"/><rect x="2.300" y="16" width="19.500" height="5.200"/></g><g transform="translate(15 11) rotate(24)"><path d="M-2.400 -11 H2.400 V6 L0 11.500 L-2.400 6Z" fill="#e8e0dc" stroke="#8a8078" stroke-width="0.900" stroke-linejoin="round"/><path d="M-2.400 -9 H2.400" stroke="#8a8078" stroke-width="0.900"/><path d="M-0.800 -9 V6 M0.800 -9 V6" stroke="#aaa" stroke-width="0.600"/><path d="M-2.400 6 L0 11.500 L2.400 6Z" fill="#d8d8d8" stroke="#555" stroke-width="0.700"/><path d="M-0.900 9.300 L0 11.500 L0.900 9.300Z" fill="#333"/><path d="M-2.400 -11 H2.400 V-9 H-2.400Z" fill="#eee" stroke="#8a8078" stroke-width="0.700"/></g></svg>
<svg style="left:448px;top:109px" width="24" height="24" viewBox="0 0 24 24" opacity="0.32"><rect x="3" y="2" width="13" height="13" fill="#c8c0a8" stroke="#9a9478" stroke-width="0.700"/><path d="M5 7.500 H21.500 M10 4.500 H21" stroke="#a06a78" stroke-width="1.500"/><path d="M6 8.500 H20.500 L19.500 22.500 H7Z" fill="#e8d4d8" stroke="#a06a78" stroke-width="1.300"/><path d="M10 10 V21 M13.300 10 V21 M16.600 10 V21" stroke="#a06a78" stroke-width="1.200"/></svg>
<svg style="left:482px;top:109px" width="24" height="24" viewBox="0 0 24 24" opacity="0.32"><path d="M1.500 5 L17 13.500 M1.500 11.500 L17 8.500" stroke="#777" stroke-width="1.800"/><ellipse cx="19.500" cy="7" rx="3" ry="2.400" fill="none" stroke="#a06a78" stroke-width="1.500" transform="rotate(-25 19.500 7)"/><ellipse cx="19.500" cy="15.500" rx="3" ry="2.400" fill="none" stroke="#a06a78" stroke-width="1.500" transform="rotate(25 19.500 15.500)"/></svg>
<svg style="left:515px;top:109px" width="24" height="24" viewBox="0 0 24 24" opacity="0.32"><path d="M8.5 1.5 h7.500 l3.500 3.500 v12.500 h-11z" fill="#f4f4f4" stroke="#666" stroke-width="1"/><path d="M10.5 8.5 h6 M10.5 11.0 h6 M10.5 13.5 h6 M10.5 16.0 h6" stroke="#888" stroke-width="0.800"/><path d="M3.5 5 h7.500 l3.500 3.500 v12.500 h-11z" fill="#f4f4f4" stroke="#666" stroke-width="1"/><path d="M5.5 12 h6 M5.5 14.5 h6 M5.5 17 h6 M5.5 19.5 h6" stroke="#888" stroke-width="0.800"/></svg>
<svg style="left:548px;top:109px" width="24" height="24" viewBox="0 0 24 24" opacity="0.32"><rect x="4.500" y="2.500" width="15" height="19" rx="1" fill="#d8d4c8" stroke="#777" stroke-width="1.200"/><rect x="8" y="1" width="8" height="4" fill="#bbb" stroke="#777" stroke-width="0.800"/><path d="M6.5 5.5 h7.500 l3.500 3.500 v10.500 h-11z" fill="#f4f4f4" stroke="#666" stroke-width="1"/><path d="M8.5 12.5 h6 M8.5 15.0 h6 M8.5 17.5 h6 M8.5 20.0 h6" stroke="#888" stroke-width="0.800"/></svg>
<svg style="left:581px;top:109px" width="24" height="24" viewBox="0 0 24 24" opacity="0.32"><path d="M1.500 8.500 L9.500 2 V6 Q18.500 6 19.500 13 Q19.500 19.500 12 20 H9 V15.500 H12 Q15 15 14.500 13 Q14 11 9.500 11 V15Z" fill="#8a7a6a" stroke="#6a5a4a" stroke-width="0.500"/></svg>
<svg style="left:614px;top:109px" width="24" height="24" viewBox="0 0 24 24" opacity="0.32"><path d="M22.500 8.500 L14.500 2 V6 Q5.500 6 4.500 13 Q4.500 19.500 12 20 H15 V15.500 H12 Q9 15 9.500 13 Q10 11 14.500 11 V15Z" fill="#7a8078" stroke="#5a6058" stroke-width="0.500"/></svg>
<div class="a" style="left:651px;top:113px;width:1px;height:17px;background:repeating-linear-gradient(#b4b4b4 0 1px,transparent 1px 3px)"></div>
<div class="a" style="left:654px;top:113px;width:1px;height:17px;background:repeating-linear-gradient(#b4b4b4 0 1px,transparent 1px 3px)"></div>
<svg style="left:662px;top:109px" width="24" height="24" viewBox="0 0 24 24"><path d="M1.5 9.300 L6.5 4.100 H22.5 V14.500 H6.5Z" fill="#f5d83a" stroke="#c8a820" stroke-width="1.2" stroke-linejoin="round"/><text x="14.300" y="12" font-family="Liberation Sans" font-weight="700" font-size="8.300" fill="#333" text-anchor="middle">abc</text></svg>
<svg style="left:695px;top:109px" width="24" height="24" viewBox="0 0 24 24"><circle cx="10" cy="8.800" r="6.800" fill="#2e9a4a"/><path d="M10 8.800 L4.500 4.800 A6.800 6.800 0 0 1 15.500 4.800Z" fill="#f2c322"/><path d="M10 8.800 L15.500 4.800 A6.800 6.800 0 0 1 11.500 15.400Z" fill="#b0181c"/><rect x="12" y="16.500" width="3.200" height="6" fill="#f2c322" stroke="#c99a10" stroke-width="0.500"/><rect x="15.400" y="10" width="3.200" height="12.500" fill="#2e9a4a" stroke="#1a7a32" stroke-width="0.500"/><rect x="18.800" y="16.500" width="3.400" height="6" fill="#b0181c" stroke="#7a1014" stroke-width="0.500"/></svg>
<div class="a" style="left:728px;top:112px;width:1px;height:19px;background:#cdcdcd"></div>
<svg style="left:735px;top:109px" width="24" height="24" viewBox="0 0 24 24"><path d="M1.8 9.300 L6.5 4.100 H22 V14.500 H6.5Z" fill="#dbe8f8" stroke="#5b9bf0" stroke-width="1.2" stroke-linejoin="round"/><text x="11.300" y="12" font-family="Liberation Sans" font-weight="700" font-size="8.300" fill="#333" text-anchor="middle">ab</text><path d="M18.300 7.500 L19.600 14" stroke="#e8e8e8" stroke-width="2.200" stroke-linecap="round"/><path d="M17.300 7.500 L18.600 14" stroke="#999" stroke-width="0.500"/><circle cx="19.800" cy="18" r="4.800" fill="#a01a1e"/><circle cx="18.500" cy="16.500" r="1.500" fill="#c85a5e"/></svg>
<svg style="left:768px;top:109px" width="24" height="24" viewBox="0 0 24 24"><path d="M1.5 9.300 L6.5 4.100 H22.3 V14.500 H6.5Z" fill="#fde4e4" stroke="#e31a1c" stroke-width="1.3" stroke-linejoin="round"/><text x="14.300" y="12" font-family="Liberation Sans" font-weight="700" font-size="8.300" fill="#e31a1c" text-anchor="middle">abc</text></svg>
<div class="a" style="left:801px;top:112px;width:1px;height:19px;background:#cdcdcd"></div>
<svg style="left:817.3px;top:117.5px" width="10" height="8" viewBox="0 0 10 8" fill="none" stroke-linejoin="miter"><path d="M1.300 1.400 L3.800 4 L1.300 6.600 M5.400 1.400 L7.900 4 L5.400 6.600" stroke="#fff" stroke-width="3.200" opacity="0.800"/><path d="M1.300 1.400 L3.800 4 L1.300 6.600 M5.400 1.400 L7.900 4 L5.400 6.600" stroke="#000" stroke-width="1.700"/></svg>
<div class="a" style="left:836px;top:113px;width:1px;height:17px;background:repeating-linear-gradient(#b4b4b4 0 1px,transparent 1px 3px)"></div>
<div class="a" style="left:839px;top:113px;width:1px;height:17px;background:repeating-linear-gradient(#b4b4b4 0 1px,transparent 1px 3px)"></div>
<svg style="left:848.5px;top:109px" width="24" height="24" viewBox="0 0 24 24"><defs><radialGradient id="ms" cx="40%" cy="30%" r="75%"><stop offset="0" stop-color="#a8c8ee"/><stop offset="1" stop-color="#3f6aa5"/></radialGradient></defs><circle cx="12" cy="10.200" r="11" fill="url(#ms)" stroke="#2f4a7a" stroke-width="0.900"/><g fill="none" stroke="#dbe8f8" stroke-width="0.800" opacity="0.900"><ellipse cx="12" cy="10.200" rx="5" ry="11"/><path d="M1 10.200 H23 M2.500 5 H21.500 M2.500 15.500 H21.500 M12 -0.800 V21"/></g><path d="M5 4 q3 -2 5 0 q0 3 -2 4 q-3 0 -3 -4z M13 6 q3 -2 6 0 q1 4 -2 6 q-4 0 -4 -6z" fill="#2f4a7a" opacity="0.700"/><g fill="#111"><path d="M4.500 15.500 h5 l1 2 h3 l1 -2 h5 l2.500 5 q0.500 3.500 -3.500 3.500 q-3.500 0 -4 -3 h-5 q-0.500 3 -4 3 q-4 0 -3.500 -3.500z"/></g><ellipse cx="6" cy="21" rx="2.600" ry="1.700" fill="#fff"/><ellipse cx="18" cy="21" rx="2.600" ry="1.700" fill="#fff"/></svg>
<div class="a" style="left:885px;top:113px;width:1px;height:17px;background:repeating-linear-gradient(#b4b4b4 0 1px,transparent 1px 3px)"></div>
<div class="a" style="left:888px;top:113px;width:1px;height:17px;background:repeating-linear-gradient(#b4b4b4 0 1px,transparent 1px 3px)"></div>
<svg style="left:897px;top:109px" width="24" height="24" viewBox="0 0 24 24"><path d="M11.500 1.800 Q6.500 1.800 6.500 5 V7.500 H12 V8.500 H4.500 Q1.800 8.500 1.800 12.500 Q1.800 16.500 4.500 16.500 H6.500 V13.500 Q6.500 11 9.500 11 H14 Q16.500 11 16.500 8.500 V5 Q16.500 1.800 11.500 1.800Z" fill="#3b77b0"/><circle cx="8.800" cy="4.500" r="1.100" fill="#fff"/><path d="M12 21.800 Q17 21.800 17 18.500 V16 H11.500 V15 H19 Q21.800 15 21.800 11.500 Q21.800 8.500 19 8.500 H17.500 V10.500 Q17.500 13 14.500 13 H10 Q7.500 13 7.500 15.500 V18.500 Q7.500 21.800 12 21.800Z" fill="#f7cf3e"/><circle cx="14.700" cy="19" r="1.100" fill="#fff"/><path d="M15.500 16.500 L22 19.300 L15.500 22.200" fill="none" stroke="#444" stroke-width="1.500"/></svg>
<div class="a" style="left:934px;top:113px;width:1px;height:17px;background:repeating-linear-gradient(#b4b4b4 0 1px,transparent 1px 3px)"></div>
<div class="a" style="left:937px;top:113px;width:1px;height:17px;background:repeating-linear-gradient(#b4b4b4 0 1px,transparent 1px 3px)"></div>
<svg style="left:946px;top:109px" width="24" height="24" viewBox="0 0 24 24"><rect x="2" y="1.300" width="20.200" height="21" rx="1" fill="#5b86c1" stroke="#2c3e50" stroke-width="0.800"/><rect x="2" y="1.300" width="5" height="21" fill="#2c3e50"/><text x="14.800" y="17" font-family="Liberation Sans" font-size="14" fill="#fff" text-anchor="middle">?</text></svg>
<div class="a" style="left:983px;top:113px;width:1px;height:17px;background:repeating-linear-gradient(#b4b4b4 0 1px,transparent 1px 3px)"></div>
<div class="a" style="left:986px;top:113px;width:1px;height:17px;background:repeating-linear-gradient(#b4b4b4 0 1px,transparent 1px 3px)"></div>
<div class="a" style="left:6px;top:152px;width:1px;height:17px;background:repeating-linear-gradient(#b4b4b4 0 1px,transparent 1px 3px)"></div>
<div class="a" style="left:9px;top:152px;width:1px;height:17px;background:repeating-linear-gradient(#b4b4b4 0 1px,transparent 1px 3px)"></div>
<svg style="left:19px;top:148.5px" width="24" height="24" viewBox="0 0 24 24"><g transform="rotate(-45 12 12) translate(12 12) scale(1.08) translate(-12 -12)"><path d="M4.500 3 V12.500 Q4.500 20 12 20 Q19.500 20 19.500 12.500 V3 H14.500 V12.500 Q14.500 15 12 15 Q9.500 15 9.500 12.500 V3Z" fill="#cc1414" stroke="#8a0a0a" stroke-width="0.800"/><rect x="4.500" y="3" width="5" height="3.600" fill="#fff" stroke="#8a0a0a" stroke-width="0.800"/><rect x="14.500" y="3" width="5" height="3.600" fill="#fff" stroke="#8a0a0a" stroke-width="0.800"/></g></svg>
<svg style="left:52px;top:148px" width="24" height="24" viewBox="0 0 24 24" opacity="0.32"><path d="M3 2 L9 16 L15 4 M9 16 L13 9 L20 8 M13 9 L19 3" fill="none" stroke="#777" stroke-width="1"/><g fill="#ddd" stroke="#666" stroke-width="0.800"><rect x="1.500" y="0.500" width="3" height="3"/><rect x="7.500" y="14.500" width="3" height="3"/><rect x="13.500" y="2.500" width="3" height="3"/><rect x="17.500" y="1.500" width="3" height="3"/><rect x="18.500" y="6.500" width="3" height="3"/><rect x="11.500" y="7.500" width="3" height="3"/></g><path d="M19 21 h5 l-2.500 3z" fill="#222"/></svg>
<svg style="left:85px;top:148px" width="24" height="24" viewBox="0 0 24 24" opacity="0.32"><g fill="#eee" stroke="#555" stroke-width="1"><rect x="3.500" y="4.500" width="3.500" height="3.500"/><rect x="15.500" y="6.500" width="3.500" height="3.500"/><rect x="9.500" y="16.500" width="3.500" height="3.500"/></g><path d="M19.500 21 h5 l-2.500 3z" fill="#222"/></svg>
<div class="a" style="left:113px;top:149px;width:100px;height:23px;box-sizing:border-box;background:#f0f0f0;border:1px solid #aeaeae;border-radius:3px"></div>
<div class="a" style="left:198px;top:150px;width:1px;height:21px;background:#c4c4c4"></div>
<svg style="left:201px;top:153px" width="9" height="15" viewBox="0 0 9 15"><path d="M0.800 5 L4.500 1 L8.200 5Z M0.800 10 L4.500 14 L8.200 10Z" fill="#9a9a9a"/></svg>
<div class="t" style="left:118.500px;top:152.500px;font-size:15px;color:#7f7f7f;letter-spacing:-0.700px">12</div>
<div class="a" style="left:214px;top:148px;width:88px;height:25px;box-sizing:border-box;background:linear-gradient(#f6f6f6,#ececec);border:1px solid #aeaeae;border-radius:3px"></div>
<div class="t" style="left:219px;top:152.500px;font-size:15px;color:#7f7f7f;letter-spacing:-0.500px">px</div>
<svg style="left:285.5px;top:158.5px" width="9" height="5" viewBox="0 0 9 5"><path d="M0.500 0.500 H8.500 L4.500 4.800Z" fill="#8a8a8a"/></svg>
<svg style="left:308px;top:148px" width="24" height="24" viewBox="0 0 24 24"><path d="M7.800 10.900 L2.500 1.700 M7.800 10.900 L21.300 6 M7.800 10.900 V22.400" stroke="#5aa55a" stroke-width="1.400" fill="none"/><rect x="6" y="9.100" width="3.600" height="3.600" fill="#ccc" stroke="#555" stroke-width="0.900"/></svg>
<svg style="left:340px;top:148px" width="24" height="24" viewBox="0 0 24 24" opacity="0.32"><path d="M2 2 L22 22 M22 2 L2 22" stroke="#888" stroke-width="1.300"/><rect x="10" y="10" width="4" height="4" fill="#eee" stroke="#888" stroke-width="0.800"/></svg>
<svg style="left:373px;top:148px" width="24" height="24" viewBox="0 0 24 24" opacity="0.32"><path d="M2 22 L22 2" stroke="#888" stroke-width="1.300"/><path d="M5 5 L12 9 L17 6 L15 12 L19 19 L12 15 L7 17 L9 12Z" fill="#8a8468" stroke="#6a644a" stroke-width="0.600"/></svg>
<svg style="left:402.5px;top:158.5px" width="9" height="5" viewBox="0 0 9 5"><path d="M0.500 0.500 H8.500 L4.500 4.800Z" fill="#8a8a8a"/></svg>
<svg style="left:7.800000000000001px;top:205.2px" width="18" height="18" viewBox="0 0 18 18"><rect x="2.700" y="2.600" width="11" height="11" fill="#f2f2f2" stroke="#6e6e6e" stroke-width="1.200"/><rect x="10.500" y="10.700" width="6" height="6" rx="1.200" fill="#5a9a5a"/><circle cx="13.500" cy="13.700" r="1.600" fill="#cfe4cf"/></svg>
<svg style="left:33px;top:204.89999999999998px" width="18" height="18" viewBox="0 0 18 18"><defs><linearGradient id="rf3" x1="0" y1="0" x2="0" y2="1"><stop offset="0" stop-color="#3f7fc8"/><stop offset="1" stop-color="#9cc0ea"/></linearGradient></defs><path d="M1.800 8 Q2.200 2.500 8.500 1.800 Q11.500 1.600 13.800 3.600 L16 1.600 V8 H9.500 L11.700 5.800 Q10 4.900 8.300 5.200 Q5.600 5.900 5.300 8Z" fill="url(#rf3)"/><path d="M16.400 10 Q16 15.500 9.700 16.200 Q6.700 16.400 4.400 14.400 L2.200 16.400 V10 H8.700 L6.500 12.200 Q8.200 13.100 9.900 12.800 Q12.600 12.100 12.900 10Z" fill="url(#rf3)"/></svg>
<svg style="left:58px;top:205.2px" width="18" height="18" viewBox="0 0 18 18"><path d="M2 2.500 Q2 1.500 3 1.500 H15 Q16 1.500 16 2.500 V4 L10.800 9.500 V16.800 L7.200 14.800 V9.500 L2 4Z" fill="#5b86c1" stroke="#4372b0" stroke-width="0.800" stroke-linejoin="round"/><rect x="2.800" y="2.200" width="12.400" height="1.900" fill="#f7dc3c"/></svg>
<svg style="left:83.5px;top:205.0px" width="18" height="18" viewBox="0 0 18 18"><path d="M2.500 2 H9 M3.500 2 V14.500 M3.500 7.500 H6 M3.500 13.500 H6" fill="none" stroke="#9a9a9a" stroke-width="1"/><rect x="5.500" y="5.800" width="3" height="3" fill="#fff" stroke="#f08c1e" stroke-width="1.100"/><rect x="5.500" y="11.800" width="3" height="3" fill="#fff" stroke="#f08c1e" stroke-width="1.100"/><path d="M12.500 1.500 L17 6.500 H14.200 V14.500 H10.800 V6.500 H8Z" fill="#4e7cb8" stroke="#2c4a72" stroke-width="0.900" stroke-linejoin="round"/></svg>
<svg style="left:108px;top:204.79999999999998px" width="18" height="18" viewBox="0 0 18 18"><circle cx="9" cy="9" r="6.900" fill="#6a92c8" stroke="#4e7cb8" stroke-width="0.800"/><path d="M10 4.300 a1.200 1.200 0 1 1 -0.100 0z M7.200 7.500 h3.300 l-1.300 4.800 h1.500 l-0.300 1.100 h-3.700 l1.300 -4.800 h-1.100z" fill="#fff"/></svg>
<svg style="left:8px;top:543.7px" width="18" height="18" viewBox="0 0 18 18"><path d="M1.500 8 L8 4 L13 7 L6.500 11Z" fill="#f2c322"/><path d="M1.500 10 L8 6.500 L13 9.500 L6.500 13.500Z" fill="#e0443a"/><path d="M1.500 8 L6.500 11 V13.500 L1.500 10Z" fill="#c03028"/><path d="M2 5.500 L8 2.500 L12 4.800 L6 8Z" fill="#5b86c1"/><path d="M16.800 2 L10.500 9" stroke="#a0682a" stroke-width="2.200" stroke-linecap="round"/><path d="M10.800 8 L7.500 12.500 L10 14 L12.500 9.800Z" fill="#c8884a" stroke="#7a4a1a" stroke-width="0.600"/></svg>
<svg style="left:33px;top:543.7px" width="18" height="18" viewBox="0 0 18 18"><rect x="2.500" y="6.500" width="8" height="8.500" fill="#f4f4f4" stroke="#777" stroke-width="1"/><rect x="5" y="4" width="8" height="8.500" fill="#f4f4f4" stroke="#777" stroke-width="1"/><path d="M8.500 9.500 V3 Q8.500 1.200 10 1.200 Q11.500 1.200 11.500 3 V10.500" fill="none" stroke="#4e7cb8" stroke-width="1.300"/><rect x="10.500" y="11" width="6" height="6" rx="1.200" fill="#5a9a5a"/><circle cx="13.500" cy="14" r="1.600" fill="#cfe4cf"/></svg>
<svg style="left:58.5px;top:543.7px" width="18" height="18" viewBox="0 0 18 18"><path d="M0.800 8.500 Q8 1.500 15.500 8.500 Q8 14.500 0.800 8.500Z" fill="#f4f4f4" stroke="#8a8a8a" stroke-width="1"/><path d="M1.500 6 Q8 0.500 15 6" fill="none" stroke="#aaa" stroke-width="0.800"/><circle cx="8.200" cy="8" r="3.300" fill="#5b86c1" stroke="#3f6aa5" stroke-width="0.600"/><circle cx="8.200" cy="8" r="1.400" fill="#223"/><path d="M12.500 14.500 h5 l-2.500 2.800z" fill="#444"/></svg>
<svg style="left:83.3px;top:544.0px" width="18" height="18" viewBox="0 0 18 18"><path d="M2 2.500 Q2 1.500 3 1.500 H15 Q16 1.500 16 2.500 V4 L10.800 9.500 V16.800 L7.200 14.800 V9.500 L2 4Z" fill="#5b86c1" stroke="#4372b0" stroke-width="0.800" stroke-linejoin="round"/><rect x="2.800" y="2.200" width="12.400" height="1.900" fill="#f7dc3c"/></svg>
<svg style="left:110px;top:543.7px" width="18" height="18" viewBox="0 0 18 18"><text x="0.300" y="13.600" font-family="Liberation Serif" font-size="23" fill="#6a2a7a" stroke="#6a2a7a" stroke-width="0.400">&#949;</text><path d="M9.800 10.300 H16.200 L14.500 13.500 V17 H11.500 V13.500Z" fill="#b8b8b8" stroke="#8a8a8a" stroke-width="0.600"/></svg>
<svg style="left:130.5px;top:551.2px" width="9" height="5" viewBox="0 0 9 5"><path d="M0.500 0.500 H8.500 L4.500 4.800Z" fill="#555"/></svg>
<svg style="left:146px;top:543.7px" width="18" height="18" viewBox="0 0 18 18"><path d="M2.500 2 H9 M3.500 2 V14.500 M3.500 7.500 H6 M3.500 13.500 H6" fill="none" stroke="#9a9a9a" stroke-width="1"/><rect x="5.500" y="5.800" width="3" height="3" fill="#fff" stroke="#f08c1e" stroke-width="1.100"/><rect x="5.500" y="11.800" width="3" height="3" fill="#fff" stroke="#f08c1e" stroke-width="1.100"/><path d="M12.500 16 L17 11 H14.200 V3 H10.800 V11 H8Z" fill="#4e7cb8" stroke="#2c4a72" stroke-width="0.900" stroke-linejoin="round"/></svg>
<svg style="left:171.3px;top:543.7px" width="18" height="18" viewBox="0 0 18 18"><path d="M2.500 2 H9 M3.500 2 V14.500 M3.500 7.500 H6 M3.500 13.500 H6" fill="none" stroke="#9a9a9a" stroke-width="1"/><rect x="5.500" y="5.800" width="3" height="3" fill="#fff" stroke="#f08c1e" stroke-width="1.100"/><rect x="5.500" y="11.800" width="3" height="3" fill="#fff" stroke="#f08c1e" stroke-width="1.100"/><path d="M12.500 1.500 L17 6.500 H14.200 V14.500 H10.800 V6.500 H8Z" fill="#4e7cb8" stroke="#2c4a72" stroke-width="0.900" stroke-linejoin="round"/></svg>
<svg style="left:195.5px;top:543.7px" width="18" height="18" viewBox="0 0 18 18"><rect x="2" y="2.300" width="11.500" height="11" fill="#f2f2f2" stroke="#6e6e6e" stroke-width="1.300"/><rect x="9.700" y="11" width="7" height="5.800" rx="1.200" fill="#e23a44"/><path d="M11.200 13.900 H15.200" stroke="#fff" stroke-width="1.500"/></svg>
<div class="t" style="left:4.5px;top:183.7px;font-size:14.5px;color:#111;font-weight:400;letter-spacing:0.052px;">Browser</div>
<svg style="left:290px;top:183.6px" width="26" height="11" viewBox="0 0 26 11" fill="none" stroke="#555" stroke-width="1"><rect x="0.5" y="0.5" width="10" height="10" rx="2" fill="#f4f4f4"/><rect x="4.500" y="2.500" width="4" height="3.500" fill="#fff"/><rect x="2.500" y="4.500" width="4" height="3.500" fill="#fff"/><rect x="14.500" y="0.500" width="10" height="10" rx="2" fill="#f4f4f4"/><path d="M17 3 L22 8 M22 3 L17 8" stroke="#333" stroke-width="1.7"/></svg>
<div class="tree" style="left:2px;top:230px;width:315px;height:283px;overflow:hidden" id="btree">
<svg style="left:27px;top:6.5px" width="6" height="10" viewBox="0 0 6 10"><path d="M1 0.500 L5.200 5 L1 9.500Z" fill="#404040"/></svg>
<svg style="left:41.5px;top:4.5px" width="16" height="14" viewBox="0 0 16 14"><path d="M1.500 12.500 V2.200 Q1.500 1.500 2.200 1.500 H6.300 L7.500 3.500 H13.800 Q14.500 3.500 14.500 4.200 V12.500 Q14.500 13 13.800 13 H2.200 Q1.500 13 1.500 12.500Z" fill="#f2f2f2" stroke="#9a9a9a" stroke-width="1"/><path d="M2 4.500 H8" stroke="#b0b0b0" stroke-width="1"/></svg>
<div class="t" style="left:63.699999999999996px;top:4.2px;font-size:14.5px;color:#111;font-weight:400;letter-spacing:0.184px;">.VirtualBox</div>
<svg style="left:27px;top:28.5px" width="6" height="10" viewBox="0 0 6 10"><path d="M1 0.500 L5.200 5 L1 9.500Z" fill="#404040"/></svg>
<svg style="left:41.5px;top:26.5px" width="16" height="14" viewBox="0 0 16 14"><path d="M1.500 12.500 V2.200 Q1.500 1.500 2.200 1.500 H6.300 L7.500 3.500 H13.800 Q14.500 3.500 14.500 4.200 V12.500 Q14.500 13 13.800 13 H2.200 Q1.500 13 1.500 12.500Z" fill="#f2f2f2" stroke="#9a9a9a" stroke-width="1"/><path d="M2 4.500 H8" stroke="#b0b0b0" stroke-width="1"/></svg>
<div class="t" style="left:63.699999999999996px;top:26.2px;font-size:14.5px;color:#111;font-weight:400;letter-spacing:-0.014px;">.vscode</div>
<svg style="left:27px;top:50.5px" width="6" height="10" viewBox="0 0 6 10"><path d="M1 0.500 L5.200 5 L1 9.500Z" fill="#404040"/></svg>
<svg style="left:41.5px;top:48.5px" width="16" height="14" viewBox="0 0 16 14"><path d="M1.500 12.500 V2.200 Q1.500 1.500 2.200 1.500 H6.300 L7.500 3.500 H13.800 Q14.500 3.500 14.500 4.200 V12.500 Q14.500 13 13.800 13 H2.200 Q1.500 13 1.500 12.500Z" fill="#f2f2f2" stroke="#9a9a9a" stroke-width="1"/><path d="M2 4.500 H8" stroke="#b0b0b0" stroke-width="1"/></svg>
<div class="t" style="left:63.699999999999996px;top:48.2px;font-size:14.5px;color:#111;font-weight:400;letter-spacing:0.218px;">3D Objects</div>
<svg style="left:27px;top:72.5px" width="6" height="10" viewBox="0 0 6 10"><path d="M1 0.500 L5.200 5 L1 9.500Z" fill="#404040"/></svg>
<svg style="left:41.5px;top:70.5px" width="16" height="14" viewBox="0 0 16 14"><path d="M1.500 12.500 V2.200 Q1.500 1.500 2.200 1.500 H6.300 L7.500 3.500 H13.800 Q14.500 3.500 14.500 4.200 V12.500 Q14.500 13 13.800 13 H2.200 Q1.500 13 1.500 12.500Z" fill="#f2f2f2" stroke="#9a9a9a" stroke-width="1"/><path d="M2 4.500 H8" stroke="#b0b0b0" stroke-width="1"/></svg>
<div class="t" style="left:63.699999999999996px;top:70.2px;font-size:14.5px;color:#111;font-weight:400;letter-spacing:0.291px;">Anaconda3</div>
<svg style="left:27px;top:94.5px" width="6" height="10" viewBox="0 0 6 10"><path d="M1 0.500 L5.200 5 L1 9.500Z" fill="#404040"/></svg>
<svg style="left:41.5px;top:92.5px" width="16" height="14" viewBox="0 0 16 14"><path d="M1.500 12.500 V2.200 Q1.500 1.500 2.200 1.500 H6.300 L7.500 3.500 H13.800 Q14.500 3.500 14.500 4.200 V12.500 Q14.500 13 13.800 13 H2.200 Q1.500 13 1.500 12.500Z" fill="#f2f2f2" stroke="#9a9a9a" stroke-width="1"/><path d="M2 4.500 H8" stroke="#b0b0b0" stroke-width="1"/></svg>
<div class="t" style="left:63.699999999999996px;top:92.2px;font-size:14.5px;color:#111;font-weight:400;letter-spacing:0.756px;">AppMods</div>
<svg style="left:27px;top:116.5px" width="6" height="10" viewBox="0 0 6 10"><path d="M1 0.500 L5.200 5 L1 9.500Z" fill="#404040"/></svg>
<svg style="left:41.5px;top:114.5px" width="16" height="14" viewBox="0 0 16 14"><path d="M1.500 12.500 V2.200 Q1.500 1.500 2.200 1.500 H6.300 L7.500 3.500 H13.800 Q14.500 3.500 14.500 4.200 V12.500 Q14.500 13 13.800 13 H2.200 Q1.500 13 1.500 12.500Z" fill="#f2f2f2" stroke="#9a9a9a" stroke-width="1"/><path d="M2 4.500 H8" stroke="#b0b0b0" stroke-width="1"/></svg>
<div class="t" style="left:63.699999999999996px;top:114.2px;font-size:14.5px;color:#111;font-weight:400;letter-spacing:0.376px;">Autodesk</div>
<svg style="left:27px;top:138.5px" width="6" height="10" viewBox="0 0 6 10"><path d="M1 0.500 L5.200 5 L1 9.500Z" fill="#404040"/></svg>
<svg style="left:41.5px;top:136.5px" width="16" height="14" viewBox="0 0 16 14"><path d="M1.500 12.500 V2.200 Q1.500 1.500 2.200 1.500 H6.300 L7.500 3.500 H13.800 Q14.500 3.500 14.500 4.200 V12.500 Q14.500 13 13.800 13 H2.200 Q1.500 13 1.500 12.500Z" fill="#f2f2f2" stroke="#9a9a9a" stroke-width="1"/><path d="M2 4.500 H8" stroke="#b0b0b0" stroke-width="1"/></svg>
<div class="t" style="left:63.699999999999996px;top:136.2px;font-size:14.5px;color:#111;font-weight:400;letter-spacing:0.038px;">Contacts</div>
<svg style="left:27px;top:160.5px" width="6" height="10" viewBox="0 0 6 10"><path d="M1 0.500 L5.200 5 L1 9.500Z" fill="#404040"/></svg>
<svg style="left:41.5px;top:158.5px" width="16" height="14" viewBox="0 0 16 14"><path d="M1.500 12.500 V2.200 Q1.500 1.500 2.200 1.500 H6.300 L7.500 3.500 H13.800 Q14.500 3.500 14.500 4.200 V12.500 Q14.500 13 13.800 13 H2.200 Q1.500 13 1.500 12.500Z" fill="#f2f2f2" stroke="#9a9a9a" stroke-width="1"/><path d="M2 3.500 H14 M2 5.500 H14" stroke="#8a8a8a" stroke-width="1.200"/></svg>
<div class="t" style="left:63.699999999999996px;top:158.2px;font-size:14.5px;color:#111;font-weight:400;letter-spacing:0.333px;">Desktop</div>
<svg style="left:27px;top:182.5px" width="6" height="10" viewBox="0 0 6 10"><path d="M1 0.500 L5.200 5 L1 9.500Z" fill="#404040"/></svg>
<svg style="left:41.5px;top:180.5px" width="16" height="14" viewBox="0 0 16 14"><path d="M1.500 12.500 V2.200 Q1.500 1.500 2.200 1.500 H6.300 L7.500 3.500 H13.800 Q14.500 3.500 14.500 4.200 V12.500 Q14.500 13 13.800 13 H2.200 Q1.500 13 1.500 12.500Z" fill="#f2f2f2" stroke="#9a9a9a" stroke-width="1"/><path d="M2 4.500 H8" stroke="#b0b0b0" stroke-width="1"/></svg>
<div class="t" style="left:63.699999999999996px;top:180.2px;font-size:14.5px;color:#111;font-weight:400;letter-spacing:0.295px;">Documents</div>
<svg style="left:27px;top:204.5px" width="6" height="10" viewBox="0 0 6 10"><path d="M1 0.500 L5.200 5 L1 9.500Z" fill="#404040"/></svg>
<svg style="left:41.5px;top:202.5px" width="16" height="14" viewBox="0 0 16 14"><path d="M1.500 12.500 V2.200 Q1.500 1.500 2.200 1.500 H6.300 L7.500 3.500 H13.800 Q14.500 3.500 14.500 4.200 V12.500 Q14.500 13 13.800 13 H2.200 Q1.500 13 1.500 12.500Z" fill="#f2f2f2" stroke="#9a9a9a" stroke-width="1"/><path d="M2 4.500 H8" stroke="#b0b0b0" stroke-width="1"/></svg>
<div class="t" style="left:63.699999999999996px;top:202.2px;font-size:14.5px;color:#111;font-weight:400;letter-spacing:0.494px;">Downloads</div>
<svg style="left:27px;top:226.5px" width="6" height="10" viewBox="0 0 6 10"><path d="M1 0.500 L5.200 5 L1 9.500Z" fill="#404040"/></svg>
<svg style="left:41.5px;top:224.5px" width="16" height="14" viewBox="0 0 16 14"><path d="M1.500 12.500 V2.200 Q1.500 1.500 2.200 1.500 H6.300 L7.500 3.500 H13.800 Q14.500 3.500 14.500 4.200 V12.500 Q14.500 13 13.800 13 H2.200 Q1.500 13 1.500 12.500Z" fill="#f2f2f2" stroke="#9a9a9a" stroke-width="1"/><path d="M2 4.500 H8" stroke="#b0b0b0" stroke-width="1"/></svg>
<div class="t" style="left:63.699999999999996px;top:224.2px;font-size:14.5px;color:#111;font-weight:400;letter-spacing:-0.281px;">Dropbox (BOSTON UNIVERSITY)</div>
<svg style="left:27px;top:248.5px" width="6" height="10" viewBox="0 0 6 10"><path d="M1 0.500 L5.200 5 L1 9.500Z" fill="#404040"/></svg>
<svg style="left:41.5px;top:246.5px" width="16" height="14" viewBox="0 0 16 14"><path d="M1.500 12.500 V2.200 Q1.500 1.500 2.200 1.500 H6.300 L7.500 3.500 H13.800 Q14.500 3.500 14.500 4.200 V12.500 Q14.500 13 13.800 13 H2.200 Q1.500 13 1.500 12.500Z" fill="#f2f2f2" stroke="#9a9a9a" stroke-width="1"/><path d="M2 4.500 H8" stroke="#b0b0b0" stroke-width="1"/></svg>
<div class="t" style="left:63.699999999999996px;top:246.2px;font-size:14.5px;color:#111;font-weight:400;letter-spacing:0.243px;">eclipse</div>
<svg style="left:27px;top:270.5px" width="6" height="10" viewBox="0 0 6 10"><path d="M1 0.500 L5.200 5 L1 9.500Z" fill="#404040"/></svg>
<svg style="left:41.5px;top:268.5px" width="16" height="14" viewBox="0 0 16 14"><path d="M1.500 12.500 V2.200 Q1.500 1.500 2.200 1.500 H6.300 L7.500 3.500 H13.800 Q14.500 3.500 14.500 4.200 V12.500 Q14.500 13 13.800 13 H2.200 Q1.500 13 1.500 12.500Z" fill="#f2f2f2" stroke="#9a9a9a" stroke-width="1"/><path d="M2 4.500 H8" stroke="#b0b0b0" stroke-width="1"/></svg>
<div class="t" style="left:63.699999999999996px;top:268.2px;font-size:14.5px;color:#111;font-weight:400;letter-spacing:0.195px;">eclipse-workspace</div>
<div class="a" style="left:299px;top:0;width:15px;height:281px;background:#e1e1e1;border-left:1px solid #bdbdbd"></div>
<div class="a" style="left:300px;top:0;width:14px;height:13px;background:#f6f6f6;border-bottom:1px solid #c8c8c8"></div>
<div class="a" style="left:300px;top:267px;width:14px;height:14px;background:#f6f6f6;border-top:1px solid #c8c8c8"></div>
<div class="a" style="left:300px;top:107px;width:14px;height:47px;background:linear-gradient(90deg,#fdfdfd,#ececec);border-top:1px solid #b8b8b8;border-bottom:1px solid #b8b8b8"></div>
<svg style="left:303px;top:4px" width="8" height="5" viewBox="0 0 8 5"><path d="M0 4.500 L4 0.500 L8 4.500Z" fill="#444"/></svg>
<svg style="left:303px;top:272px" width="8" height="5" viewBox="0 0 8 5"><path d="M0 0.500 L4 4.500 L8 0.500Z" fill="#444"/></svg>
</div>
<div class="a" style="left:152px;top:516px;width:16px;height:1px;background:repeating-linear-gradient(90deg,#b0b0b0 0 1px,transparent 1px 3px)"></div>
<div class="t" style="left:4.5px;top:522.7px;font-size:14.5px;color:#111;font-weight:400;letter-spacing:-0.466px;">Layers</div>
<svg style="left:290px;top:522.6px" width="26" height="11" viewBox="0 0 26 11" fill="none" stroke="#555" stroke-width="1"><rect x="0.5" y="0.5" width="10" height="10" rx="2" fill="#f4f4f4"/><rect x="4.500" y="2.500" width="4" height="3.500" fill="#fff"/><rect x="2.500" y="4.500" width="4" height="3.500" fill="#fff"/><rect x="14.500" y="0.500" width="10" height="10" rx="2" fill="#f4f4f4"/><path d="M17 3 L22 8 M22 3 L17 8" stroke="#333" stroke-width="1.7"/></svg>
<div class="tree" style="left:2px;top:569px;width:315px;height:422px" id="ltree">
<div class="a" style="left:0;top:45px;width:313px;height:22px;background:#f0f0f0"></div>
<svg style="left:22.5px;top:4.7999999999999545px" width="13" height="13" viewBox="0 0 13 13"><rect x="0.5" y="0.5" width="12" height="12" fill="#fff" stroke="#444" stroke-width="1"/><path d="M3 6.500 L5.300 9.300 L10 3.300" fill="none" stroke="#111" stroke-width="1.600"/></svg>
<div class="a" style="left:42px;top:10.799999999999955px;width:17px;height:1px;background:#c5b89f"></div>
<div class="t" style="left:63.699999999999996px;top:3.4999999999999547px;font-size:14.5px;color:#000;font-weight:700;letter-spacing:0.100px;">roads</div>
<div class="a" style="left:309px;top:2.7999999999999545px;width:3px;height:17px;background:#dedede"></div>
<svg style="left:22.5px;top:26.799999999999955px" width="13" height="13" viewBox="0 0 13 13"><rect x="0.5" y="0.5" width="12" height="12" fill="#fff" stroke="#444" stroke-width="1"/><path d="M3 6.500 L5.300 9.300 L10 3.300" fill="none" stroke="#111" stroke-width="1.600"/></svg>
<div class="a" style="left:42px;top:25.299999999999955px;width:16px;height:16px;box-sizing:border-box;background:#c43c39;border:1px solid rgba(60,40,40,0.55)"></div>
<div class="t" style="left:63.699999999999996px;top:25.499999999999954px;font-size:14.5px;color:#000;font-weight:700;letter-spacing:0.045px;">buildings</div>
<div class="a" style="left:309px;top:24.799999999999955px;width:3px;height:17px;background:#dedede"></div>
<svg style="left:22.5px;top:48.799999999999955px" width="13" height="13" viewBox="0 0 13 13"><rect x="0.5" y="0.5" width="12" height="12" fill="#fff" stroke="#444" stroke-width="1"/><path d="M3 6.500 L5.300 9.300 L10 3.300" fill="none" stroke="#111" stroke-width="1.600"/></svg>
<div class="a" style="left:42px;top:47.299999999999955px;width:16px;height:16px;box-sizing:border-box;background:#ad8bb1;border:1px solid rgba(60,40,40,0.55)"></div>
<div class="t" style="left:63.699999999999996px;top:47.49999999999996px;font-size:14.5px;color:#000;font-weight:700;letter-spacing:-0.009px;text-decoration:underline;text-decoration-thickness:1.2px;text-underline-offset:1.5px;text-decoration-skip-ink:none;">protected_areas</div>
<div class="a" style="left:309px;top:46.799999999999955px;width:3px;height:17px;background:#dedede"></div>
</div>
<div class="a" style="left:320px;top:579px;width:1px;height:18px;background:repeating-linear-gradient(#b0b0b0 0 1px,transparent 1px 3px)"></div>
<div class="sb" style="left:5px;top:994px;width:200px;height:24px;border-color:#b0b0b0"></div>
<svg style="left:13px;top:999px" width="14" height="14" viewBox="0 0 14 14" fill="none" stroke="#8a8a8a" stroke-width="1.500"><circle cx="5.500" cy="5.500" r="4"/><path d="M8.500 8.500 L13 13"/></svg>
<div class="t" style="left:33.3px;top:999.8px;font-size:14.5px;color:#8a8a8a;font-weight:400;letter-spacing:-0.130px;">Type to locate (Ctrl+K)</div>
<div class="a" style="left:251.500px;top:996px;width:5px;height:20px;overflow:hidden"><div class="t" style="left:-3px;top:3.100px;font-size:14.500px">d</div></div>
<div class="sb" style="left:259px;top:994px;width:131px;height:24px"></div>
<div class="t" style="left:273px;top:999.1px;font-size:14.5px;color:#111;font-weight:400;letter-spacing:-0.879px;">20.4849,-33.9843</div>
<svg style="left:393px;top:996px" width="18" height="18" viewBox="0 0 18 18"><g transform="rotate(-38 9 9)"><rect x="4.800" y="1.800" width="8.400" height="14.500" rx="4" fill="#fff" stroke="#111" stroke-width="1.500"/><path d="M4.800 8 H13.200" stroke="#111" stroke-width="1.300"/><path d="M6.800 2.500 V7.500 M9 2 V7.500 M11.200 2.500 V7.500" stroke="#111" stroke-width="1.200"/><circle cx="9" cy="11.800" r="1.300" fill="none" stroke="#111" stroke-width="1"/></g><path d="M13.500 4.500 L15.500 2.500 M2 10.500 L3 11" stroke="#222" stroke-width="0.900"/></svg>
<div class="a" style="left:423px;top:996px;width:5px;height:20px;overflow:hidden"><div class="t" style="left:-3px;top:3.100px;font-size:14.500px">a</div></div>
<div class="sb" style="left:430px;top:994px;width:98px;height:24px"></div>
<div class="t" style="left:434.2px;top:999.1px;font-size:14.5px;color:#111;font-weight:400;letter-spacing:-0.820px;">1:32458</div>
<div class="a" style="left:506px;top:996px;width:1px;height:21px;background:#c8c8c8"></div>
<svg style="left:512px;top:1004px" width="9" height="6" viewBox="0 0 9 6"><path d="M0.500 0.500 L4.500 5 L8.500 0.500Z" fill="#555"/></svg>
<svg style="left:539px;top:997px" width="14" height="17" viewBox="0 0 14 17"><path d="M3.500 8 V5 Q3.500 1.500 7 1.500 Q10.500 1.500 10.500 5 V8" fill="none" stroke="#6e6e6e" stroke-width="2"/><rect x="1" y="7.500" width="12" height="8.500" rx="1.500" fill="#6e6e6e"/></svg>
<div class="a" style="left:560px;top:996px;width:5px;height:20px;overflow:hidden"><div class="t" style="left:0px;top:3.100px;font-size:14.500px">r</div></div>
<div class="sb" style="left:568px;top:995px;width:88px;height:22px"></div>
<div class="t" style="left:573.3px;top:999.1px;font-size:14.5px;color:#111;font-weight:400;letter-spacing:-1.531px;">100%</div>
<svg style="left:643.5px;top:999px" width="9" height="14" viewBox="0 0 9 14"><path d="M1 5.300 L4.500 1.500 L8 5.300Z M1 8.700 L4.500 12.500 L8 8.700Z" fill="#6e6e6e"/></svg><div class="a" style="left:640.5px;top:996px;width:1px;height:20px;background:#d4d4d4"></div>
<div class="a" style="left:663px;top:996px;width:5px;height:20px;overflow:hidden"><div class="t" style="left:-3px;top:3.100px;font-size:14.500px">a</div></div>
<div class="sb" style="left:678px;top:995px;width:83px;height:22px"></div>
<div class="t" style="left:682.5px;top:999.1px;font-size:14.5px;color:#111;font-weight:400;letter-spacing:-0.371px;">0.0 °</div>
<svg style="left:748.5px;top:999px" width="9" height="14" viewBox="0 0 9 14"><path d="M1 5.300 L4.500 1.500 L8 5.300Z M1 8.700 L4.500 12.500 L8 8.700Z" fill="#6e6e6e"/></svg><div class="a" style="left:745.5px;top:996px;width:1px;height:20px;background:#d4d4d4"></div>
<svg style="left:768px;top:1000px" width="13" height="13" viewBox="0 0 13 13"><rect x="0.5" y="0.5" width="12" height="12" fill="#fff" stroke="#333" stroke-width="1"/><path d="M3 6.500 L5.300 9.300 L10 3.300" fill="none" stroke="#111" stroke-width="1.600"/></svg>
<div class="t" style="left:786.5px;top:999.1px;font-size:14.5px;color:#111;font-weight:400;letter-spacing:-1.312px;">Render</div>
<svg style="left:845px;top:998px" width="16" height="16" viewBox="0 0 16 16" fill="none" stroke="#6a6a6a" stroke-width="1"><path d="M1 8 Q1 2.500 8 2.500 Q15 2.500 15 8Z" fill="#e8e8e8"/><ellipse cx="8" cy="8" rx="3" ry="5.500"/><path d="M8 2.500 V13.500 M1.500 6 H14.500 M1 8 H15 M3 11 H13"/><path d="M1 8 Q2 13.500 8 13.500 Q14 13.500 15 8" /></svg>
<div class="t" style="left:864.5px;top:999.1px;font-size:14.5px;color:#111;font-weight:400;letter-spacing:-1.635px;">EPSG:4326</div>
<svg style="left:949px;top:997px" width="17" height="17" viewBox="0 0 17 17"><path d="M1 7 Q1 2 8.500 2 Q16 2 16 7 Q16 12 8.500 12 Q7.500 12 6.500 11.800 L2.500 15 L3.500 10.800 Q1 9.500 1 7Z" fill="#6e6e6e"/><circle cx="5" cy="7" r="1.200" fill="#fff"/><circle cx="8.500" cy="7" r="1.200" fill="#fff"/><circle cx="12" cy="7" r="1.200" fill="#fff"/></svg>
<div class="a" style="left:323px;top:180px;width:672px;height:811px;background:#fff;border-left:1px solid #adb3b3;border-top:1px solid #adb3b3;box-sizing:border-box"></div>
<div class="a" style="left:994px;top:1px;width:1px;height:1020px;background:#fff"></div>
<div class="a" style="left:994px;top:180px;width:1px;height:811px;background:#d0d6d6"></div>
<div class="a" style="left:323px;top:990px;width:672px;height:1px;background:#a9b1b1"></div>
<div class="a" style="left:323px;top:991px;width:672px;height:1px;background:#f9f9f9"></div>
<div class="a" style="left:1px;top:1020px;width:994px;height:1px;background:#fff"></div>
<svg style="left:0;top:0" width="996" height="1022" viewBox="0 0 996 1022" shape-rendering="crispEdges"><rect x="992" y="1009" width="1" height="1" fill="#a0a0a0"/><rect x="993" y="1010" width="1" height="1" fill="#fff"/><rect x="989" y="1012" width="1" height="1" fill="#a0a0a0"/><rect x="990" y="1013" width="1" height="1" fill="#fff"/><rect x="992" y="1012" width="1" height="1" fill="#a0a0a0"/><rect x="993" y="1013" width="1" height="1" fill="#fff"/><rect x="986" y="1015" width="1" height="1" fill="#a0a0a0"/><rect x="987" y="1016" width="1" height="1" fill="#fff"/><rect x="989" y="1015" width="1" height="1" fill="#a0a0a0"/><rect x="990" y="1016" width="1" height="1" fill="#fff"/><rect x="992" y="1015" width="1" height="1" fill="#a0a0a0"/><rect x="993" y="1016" width="1" height="1" fill="#fff"/><rect x="983" y="1018" width="1" height="1" fill="#a0a0a0"/><rect x="984" y="1019" width="1" height="1" fill="#fff"/><rect x="986" y="1018" width="1" height="1" fill="#a0a0a0"/><rect x="987" y="1019" width="1" height="1" fill="#fff"/><rect x="989" y="1018" width="1" height="1" fill="#a0a0a0"/><rect x="990" y="1019" width="1" height="1" fill="#fff"/><rect x="992" y="1018" width="1" height="1" fill="#a0a0a0"/><rect x="993" y="1019" width="1" height="1" fill="#fff"/></svg>
<div class="a" style="left:995px;top:1px;width:1px;height:1021px;background:#2c3a26"></div>
<svg style="left:0;top:0" width="996" height="1022" viewBox="0 0 996 1022"><defs><clipPath id="mc"><rect x="324" y="181" width="670" height="809"/></clipPath></defs><g clip-path="url(#mc)">
<g fill="#fb9a99" stroke="#232323" stroke-width="0.9" shape-rendering="crispEdges">
<polygon points="318.0,175.0 1000.0,175.0 1000.0,241.3 975.0,253.5 1000.0,270.0 1000.0,349.2 955.7,349.2 880.5,347.6 775.4,347.6 768.3,368.2 738.5,368.2 703.8,350.0 690.0,351.6 648.6,360.7 645.0,372.4 620.5,372.4 614.0,309.7 577.3,297.5 537.0,295.5 500.0,296.5 383.3,307.2 372.2,307.2 318.0,273.3"/>
<polygon points="386.0,996.0 403.5,958.4 405.6,941.8 401.0,925.2 392.0,913.2 474.9,824.3 484.0,821.3 502.0,805.7 533.0,804.2 535.1,796.3 560.7,760.5 609.0,779.8 628.5,774.6 656.0,750.6 708.0,705.0 796.0,704.5 870.3,771.3 839.2,802.9 848.2,808.9 890.4,769.3 911.5,781.4 930.1,773.3 903.4,757.9 905.4,754.3 856.2,723.1 866.7,710.5 860.7,702.0 876.3,716.1 896.4,729.2 922.5,742.2 952.6,752.2 976.7,757.3 1000.0,759.0 1000.0,996.0 698.0,996.0 676.5,980.0 666.0,973.4 656.0,971.0 621.0,962.9 602.3,962.9 590.8,968.0 566.0,967.4 560.7,958.4 535.0,965.0 536.0,978.0 533.5,996.0"/>
</g>
<path d="M324.0 251.5 L339.1 253.3 L354.1 254.5 L357.9 258.8 L369.2 263.3 L384.2 268.3 L385.5 272.6 L378.0 276.9 L383.0 282.7 L391.8 285.9 L390.5 289.4 L396.8 290.9 L405.6 300.2 L408.1 291.4 L413.1 289.4 L424.4 292.7 L437.0 294.5 L447.0 287.7 L455.8 284.4 L460.8 293.4 L468.3 292.7 L477.1 288.4 L487.2 293.4 L490.9 297.0 M490.9 297.0 L502.2 308.3 L511.0 309.0 L517.3 317.8 L521.0 316.5 L527.3 327.8 L532.3 330.3 L549.9 331.1 L559.9 332.9 L561.2 341.6 L566.2 347.9 L574.0 352.4 M490.9 297.0 L504.7 298.5 L528.6 300.2 L537.4 296.5 L557.4 297.7 L568.7 300.2 L574.0 297.7 M438.2 329.6 L454.5 332.4 L464.6 333.6 L473.3 337.9 L474.1 351.7 L477.1 356.7 L483.4 361.7 L483.6 371.8 L485.9 384.3 L484.6 396.9 L482.1 411.9 L484.6 424.5 L487.2 431.0 M483.4 363.0 L514.8 362.2 L522.3 368.8 L532.3 375.5 L537.4 381.1 L543.6 388.8 L539.9 399.4 L537.4 411.9 L534.8 416.9 L522.3 423.2 L514.8 431.0 M498.4 363.7 L499.7 368.0 L519.8 368.8 M499.7 368.8 L512.3 375.5 L504.7 381.8 L503.5 385.6 L509.7 399.4 L503.5 411.9 L502.2 419.5 L504.7 425.7 L509.7 431.0 M537.4 381.1 L554.9 374.3 L574.0 358.0 M554.9 374.3 L558.7 379.3 L543.6 388.8 M554.9 375.5 L574.0 371.8 M565.0 390.1 L554.9 399.4 L544.9 419.5 L543.6 424.5 L532.3 431.0 M565.0 391.3 L557.4 396.9 L548.6 411.9 L544.9 423.2 L562.5 428.2 M480.1 402.4 L484.6 402.4 M656.8 181.0 L660.6 191.0 L661.9 204.8 L658.1 208.6 L659.3 216.1 L671.9 218.7 L670.6 222.4 L659.3 229.9 L660.6 232.5 L681.9 234.2 L679.4 238.7 L670.6 242.5 L668.1 255.0 L660.6 262.6 L650.6 266.3 L645.5 275.1 L639.3 281.4 L633.0 288.9 L619.2 292.7 L596.6 295.2 L574.0 297.0 M639.3 281.4 L654.3 281.9 L676.9 283.2 L681.9 285.2 L687.0 283.9 L697.0 289.4 L714.6 290.7 L734.6 290.2 L749.7 292.7 L764.8 297.7 L771.0 292.7 L774.8 306.5 L782.3 321.6 L787.4 331.6 L786.1 339.1 L792.4 346.7 M681.9 285.2 L674.4 287.7 L670.6 297.7 L660.6 302.7 L671.9 309.0 L676.9 314.0 L670.6 317.8 L674.4 329.1 L676.9 334.1 L687.0 339.1 L685.7 347.9 L676.9 349.2 L661.9 352.9 L651.8 351.7 L641.8 347.9 L634.2 354.2 L628.0 366.7 L626.7 371.8 M641.8 346.7 L643.0 356.7 L640.5 369.3 M614.2 314.0 L625.5 321.6 L626.7 329.1 L630.5 332.9 L621.7 340.4 L620.4 356.7 L619.2 361.7 L628.0 351.7 M759.7 315.3 L753.5 317.8 L747.2 330.3 L742.2 337.9 L741.7 346.7 L744.7 354.2 L737.2 365.5 M702.0 337.1 L709.5 344.2 L724.6 354.2 L734.6 364.2 L739.7 368.8 M576.5 297.7 L584.0 304.0 L594.1 307.8 L599.1 306.5 L590.3 317.8 L585.3 331.6 L579.0 344.2 L574.0 354.2 M599.1 306.5 L609.1 307.8 M574.0 356.7 L581.5 346.7 L589.1 336.6 L596.6 330.8 L604.1 329.6 L609.1 332.9 L615.4 344.2 L614.2 354.2 L617.9 361.7 M574.0 373.8 L586.6 363.0 L594.1 351.7 L600.4 341.6 L602.1 335.4 L597.8 333.6 L593.6 337.9 L589.1 351.7 L581.5 364.2 L574.0 374.3 M592.8 371.8 L581.5 386.8 L580.3 394.4 L589.1 404.4 L604.1 410.7 L610.4 410.7 L621.7 401.9 L628.0 394.4 L626.7 379.3 L628.0 369.3 M615.4 344.2 L611.7 356.7 L616.7 371.8 L614.2 381.8 L609.1 401.9 L601.6 422.0 L597.8 431.0 M628.0 371.8 L645.5 371.8 L669.4 373.0 L699.5 374.3 L714.6 373.0 L724.6 371.8 L730.9 366.7 M649.3 360.5 L656.8 368.0 L674.4 371.8 M684.4 354.2 L692.0 363.0 L699.5 369.3 L698.2 375.5 L679.4 383.1 L684.4 391.8 L692.0 399.4 L697.0 414.4 L699.5 431.0 M730.9 366.7 L733.4 379.3 L724.6 386.8 L709.5 391.8 L704.5 399.4 L707.0 406.9 L704.5 422.0 L702.0 431.0 M699.5 375.5 L703.3 381.8 L694.5 389.3 L697.0 399.4 L703.3 404.4 L699.5 410.7 L697.0 399.4 M738.4 368.0 L742.2 381.8 L747.2 394.4 L752.2 401.9 L747.2 416.9 L742.2 431.0 M774.8 354.2 L784.8 349.2 L794.9 347.9 L803.7 356.7 L811.2 366.7 L818.7 376.8 L817.5 389.3 L809.9 396.9 L787.4 399.4 L754.7 401.9 M753.5 403.1 L749.7 416.9 L744.7 431.0 M809.9 396.9 L816.2 406.9 L813.7 415.7 L807.4 422.0 L794.9 416.9 L782.3 415.7 L772.3 418.2 L756.0 423.2 L764.8 428.2 L774.8 431.0 M772.3 418.2 L787.4 419.5 L799.9 423.2 L809.9 431.0 M817.5 386.8 L824.0 386.3 M817.5 391.8 L824.0 393.1 M685.7 399.4 L679.4 409.4 L681.9 416.9 L692.0 422.0 L699.5 425.7 M722.1 409.4 L734.6 410.7 M617.9 394.4 L620.4 399.4 M971.9 181.0 L987.0 186.0 L994.5 187.3 M994.5 196.1 L987.0 203.6 L971.9 213.6 L951.8 221.2 L934.3 227.4 L924.2 231.2 L909.2 232.5 L891.6 231.2 L876.5 229.9 L866.5 233.7 L853.9 241.2 L848.9 248.8 L862.7 254.3 L857.7 261.3 L856.4 268.9 L859.5 276.4 L856.4 283.9 L843.9 286.4 L842.6 290.2 L831.3 287.7 L818.8 294.0 L801.2 301.5 L794.9 305.2 M794.9 305.2 L811.3 305.7 L831.3 307.3 L846.4 304.0 L866.5 301.5 L886.6 303.5 L896.6 302.7 L911.7 304.0 L926.7 311.5 L934.3 317.8 L944.3 321.6 L959.4 319.6 L979.4 319.1 L989.5 321.6 L994.5 326.6 M794.9 305.2 L786.2 314.0 L782.4 320.3 M994.5 347.2 L984.5 346.7 L971.9 346.2 L956.8 346.7 L946.8 339.1 L941.8 347.9 L942.3 359.2 L929.2 361.7 L911.7 366.7 L906.6 361.7 L890.3 358.0 L882.8 360.5 L874.0 358.0 L859.0 359.7 L846.4 364.2 L842.6 370.5 L831.3 365.5 L829.3 368.0 L833.3 374.3 L828.8 385.6 L817.5 388.1 L815.0 393.1 M761.1 381.8 L773.6 368.0 L783.7 366.7 L797.5 370.5 L789.9 380.5 L784.9 388.1 L784.9 394.4 L789.9 396.9 L782.4 399.4 L774.9 394.4 L776.1 386.8 L783.7 379.3 L771.1 384.3 L762.3 384.3 M773.6 416.9 L783.7 410.7 L798.7 403.1 L811.3 398.1 M831.3 430.5 L841.4 429.5 M324.0 509.3 L339.1 515.1 L361.7 525.1 L386.8 536.4 L399.3 549.0 L411.9 560.3 L429.4 570.3 L440.7 577.8 M440.7 577.8 L458.3 576.1 L474.6 575.3 L490.9 573.6 M440.7 577.8 L445.7 586.6 L446.5 596.7 L443.2 609.2 L442.5 621.8 L445.7 634.3 L454.5 648.1 L469.6 661.9 L484.6 673.2 L494.7 681.0 M458.3 576.1 L462.1 556.5 L467.1 531.4 L469.6 516.3 L470.1 507.6 L479.6 493.8 L487.2 477.4 L497.2 468.7 L507.2 465.6 M470.1 507.6 L460.8 505.0 L450.8 504.3 M467.1 527.6 L457.0 523.9 L448.2 522.6 M469.6 517.6 L473.3 533.9 L482.1 554.0 L490.9 573.6 M490.9 573.6 L497.2 561.5 L502.2 552.7 M490.9 573.6 L509.7 567.8 L519.8 567.0 L527.3 569.1 M490.9 573.6 L504.7 582.9 L519.8 591.6 L529.8 596.7 M487.2 431.0 L490.9 441.0 L499.7 454.8 L509.7 468.7 L519.8 481.2 L527.3 493.8 L533.6 498.8 L544.9 500.0 L554.9 498.8 L561.2 503.8 L566.2 508.8 M499.7 454.8 L509.7 454.8 L518.5 449.8 L522.3 441.0 L537.4 431.0 M508.5 431.0 L522.3 438.5 M528.6 454.1 L537.4 471.2 L542.4 485.0 L547.4 496.3 M537.4 477.4 L536.1 488.7 L533.6 498.8 M537.4 477.4 L548.6 469.9 L552.4 459.9 L558.7 458.6 L574.0 464.9 M558.7 433.5 L565.0 436.0 L566.2 446.1 L570.0 453.6 L559.9 457.4 L552.4 459.9 M547.4 493.8 L557.4 481.2 L568.7 473.7 L574.0 471.2 M484.6 673.2 L499.7 659.4 L514.8 644.4 L529.8 629.3 L539.9 611.7 L549.9 596.7 L574.0 579.1 M549.9 621.8 L562.5 631.8 L574.0 640.6 M574.0 636.8 L559.9 651.9 L547.4 669.5 L539.9 681.0 M474.6 681.0 L484.6 672.0 M494.7 670.7 L509.7 675.7 L522.3 681.0 M574.0 639.3 L589.1 626.8 L609.1 611.7 L629.2 599.2 L649.3 589.1 L674.4 579.1 L699.5 571.6 L724.6 566.5 L749.7 563.5 L774.8 561.5 L799.9 560.3 L824.0 561.0 M574.0 644.4 L594.1 629.3 L614.2 615.5 L634.2 604.2 L654.3 594.2 L676.9 584.1 L689.5 581.1 L699.5 575.3 L709.5 571.6 M824.0 561.0 L804.9 561.0 L803.7 556.5 L797.4 554.0 L774.8 555.2 L757.2 556.5 L747.2 552.7 L737.2 544.0 L724.6 533.9 L714.6 527.6 L704.5 523.9 M747.2 552.7 L754.7 541.4 L759.7 526.4 L762.3 513.8 L772.3 508.8 L782.3 503.8 L788.6 488.7 L789.9 477.4 L782.3 468.7 L772.3 458.6 L762.3 454.8 L754.7 457.4 L749.7 461.1 M734.6 444.8 L738.4 452.3 L747.2 457.4 L754.7 457.4 M744.7 431.0 L745.9 438.5 L749.7 443.0 L774.8 439.8 L799.9 436.5 L824.0 434.0 M809.9 431.0 L808.7 441.0 L804.9 446.1 L806.2 453.6 L811.2 459.9 M803.7 561.5 L804.9 567.8 L794.9 576.6 L784.8 582.9 L779.8 591.6 L782.3 604.2 L792.4 621.8 L802.4 639.3 L809.9 649.4 L824.0 664.4 M809.9 649.4 L799.9 660.7 L794.9 664.4 L792.4 659.4 M574.0 472.4 L584.0 466.1 L599.1 459.9 L619.2 453.6 L636.8 448.1 L646.8 449.8 L656.8 458.6 L664.4 468.7 M599.1 431.0 L597.8 446.1 L599.1 459.9 L596.6 473.7 L592.8 488.7 L594.1 503.8 M612.9 431.0 L611.7 441.0 L606.6 448.6 L599.1 459.9 L606.6 468.7 L610.4 473.7 M574.0 463.6 L586.6 462.4 L599.1 459.9 M683.2 441.0 L687.0 448.6 L690.7 461.1 L692.0 471.2 L699.5 481.2 M683.2 441.0 L694.5 442.3 L698.2 448.6 L699.5 438.5 L704.5 431.0 M678.2 660.7 L692.0 681.0 M676.9 581.6 L681.9 584.6 L689.5 584.1 L690.7 581.1 M826.3 561.5 L846.4 566.5 L871.5 573.6 L909.2 584.1 L951.8 595.9 L987.0 605.9 L994.5 606.7 M842.6 431.0 L851.4 437.3 L864.0 442.3 L874.0 453.6 L884.1 463.6 L890.3 474.9 L892.8 483.7 L890.3 518.9 L881.5 544.0 L874.0 561.5 L871.5 569.6 M871.5 569.6 L853.9 567.8 L838.9 562.8 L841.4 564.0 M808.8 434.8 L831.3 431.0 M823.8 664.4 L840.1 681.0 M894.6 512.6 L901.6 500.0 L909.2 488.2 L917.9 485.7 L929.2 487.5 L936.8 493.8 L946.8 498.8 L952.3 505.0 L952.3 511.3 L949.3 521.4 L950.6 530.1 L959.4 538.9 L968.9 549.0 L968.1 556.5 L959.4 579.1 L951.8 595.9 M917.9 485.7 L917.4 474.2 L926.7 473.2 L936.8 474.9 L945.5 477.4 M994.5 605.4 L989.5 606.7 L987.5 610.5 L989.0 619.3 L994.5 622.3 M768.6 431.0 L769.8 436.0 L767.3 439.8 M324.0 747.5 L341.6 742.5 L361.7 737.5 L370.4 731.2 L381.7 716.1 L391.8 701.1 L399.3 692.3 L406.8 689.8 L424.4 691.0 L444.5 691.5 L459.5 691.5 L469.6 686.0 L477.1 681.0 M484.6 681.0 L482.1 693.6 L478.4 708.6 L476.6 718.7 L482.6 719.9 M484.6 682.3 L489.7 691.0 L492.7 701.1 L494.2 707.4 M489.7 681.0 L499.7 688.5 L509.7 702.3 L519.8 711.1 L527.3 716.6 M547.4 681.0 L537.4 696.1 L527.3 716.1 L519.8 738.7 L512.3 763.8 L504.7 781.4 L498.4 792.7 L484.6 809.0 L474.1 822.8 L391.0 911.9 M532.3 681.0 L522.3 698.6 L509.7 718.7 L497.2 738.7 L490.9 748.8 L489.7 763.8 L487.2 776.4 L483.4 783.4 L469.6 799.0 L454.5 814.0 L447.0 825.3 M483.4 783.4 L499.7 788.4 L498.4 792.7 L512.3 797.7 L514.8 804.0 M512.3 797.7 L518.5 783.9 L523.5 773.4 M516.8 748.8 L522.3 750.0 L523.5 755.0 L519.8 758.3 L514.3 756.3 M514.8 804.0 L522.3 814.0 L528.6 824.1 L529.8 836.6 L528.6 856.7 L527.3 879.3 L524.8 901.9 M527.8 845.9 L537.4 847.9 L544.9 856.7 L547.4 866.7 L554.9 874.3 L565.0 875.5 L574.0 873.0 M690.7 681.0 L704.5 684.0 L717.1 686.0 L727.1 692.3 L734.6 699.8 L739.2 704.3 M644.3 681.0 L645.5 685.5 M749.2 836.1 L754.7 846.7 L764.8 856.7 L777.3 865.5 L789.4 869.3 M789.4 869.3 L774.8 889.3 L759.7 909.4 L742.2 931.0 M789.4 869.3 L793.6 889.3 L797.4 909.4 L799.9 931.0 M574.0 873.0 L581.5 871.3 L589.1 876.8 L591.6 884.3 L587.8 894.4 L579.0 901.9 L574.0 905.6 M576.5 752.5 L584.0 756.3 L591.6 763.8 L596.6 768.3 M584.0 751.3 L591.6 757.6 L599.1 765.1 M591.6 750.0 L599.1 756.3 L602.9 762.6 M840.1 681.0 L848.9 691.0 L860.2 703.1 M860.2 703.1 L855.2 703.1 L848.9 708.6 L838.9 721.2 L833.3 728.7 L840.1 737.5 L843.9 745.0 L853.9 752.5 L862.7 754.3 M860.2 754.3 L867.7 755.0 L869.0 757.6 L865.2 760.8 L860.2 756.3 M860.2 703.1 L876.5 716.1 L901.6 733.7 L926.7 750.0 L951.8 765.1 L971.9 777.6 L994.5 790.2 M994.5 791.4 L971.9 795.2 L946.8 797.7 L909.2 802.7 L886.6 805.2 L869.0 806.5 L864.0 810.3 L866.5 817.8 M951.8 765.1 L931.7 773.9 L911.7 780.9 L891.6 788.9 L874.0 796.5 L864.0 804.0 L864.0 810.3 M866.5 817.8 L859.0 812.8 L848.9 809.5 L838.9 810.3 L828.8 816.5 L816.3 825.3 L801.2 830.3 L786.2 836.6 L773.6 839.1 M800.0 831.6 L801.2 846.7 L796.2 856.7 L789.9 869.3 M910.4 804.0 L906.6 816.5 L902.9 826.6 L894.1 832.9 L882.8 837.9 L864.0 842.9 L851.4 847.9 L841.4 854.2 L836.4 864.2 L826.3 884.3 L821.3 894.4 L822.6 906.9 L827.6 931.0 M882.8 837.9 L886.6 847.9 L896.6 859.2 L901.6 865.5 L902.9 874.3 L914.2 881.8 L919.2 890.6 L921.7 894.4 M994.5 791.4 L981.9 811.5 L966.9 834.1 L946.8 861.7 L921.7 894.4 L906.6 914.4 L895.3 931.0 M994.5 796.5 L987.0 821.6 L981.9 841.6 L976.9 850.4 L966.9 852.9 L954.3 856.7 L945.5 862.2 M921.7 894.4 L926.7 906.9 L939.3 916.9 L949.3 925.7 L954.3 931.0 M949.3 925.7 L961.9 924.5 L971.9 926.5 L979.4 931.0 M391.1 912.1 L364.5 935.4 L347.6 957.4 L334.1 977.6 L324.0 991.1 M525.8 900.0 L519.7 920.2 L512.9 940.5 L504.5 954.0 L506.2 970.9 L511.2 981.0 L519.7 988.4 M580.4 900.0 L572.0 910.1 L560.2 915.2 L553.4 918.6 L543.3 920.2 L534.9 932.1 L530.5 950.6 L528.1 970.9 L528.1 979.3 L524.7 984.3 M572.0 910.1 L582.1 915.2 L583.8 925.3 L582.1 937.1 L590.5 948.9 L604.0 950.6 L627.6 947.2 L660.0 954.0 M560.2 916.2 L572.0 925.3 L573.7 933.7 L587.2 947.2 L627.6 950.6 L660.0 950.6 M550.0 991.1 L550.7 981.0 L566.9 969.2 L590.5 969.2 L604.0 964.1 L617.5 964.1 L627.6 970.9 L637.8 981.0 L660.0 984.3 M742.7 929.7 L720.7 954.0 M802.4 931.0 L808.4 960.7 L813.5 991.1 M827.7 931.0 L830.4 942.2 L848.9 955.7 L832.1 970.9 L827.0 984.3 L828.0 991.1 M896.2 930.4 L872.6 960.7 L850.6 991.1 M983.2 933.4 L994.0 934.4 M948.5 930.4 L943.4 940.5 L946.8 954.0 L943.4 970.9 L936.7 984.3 L929.9 991.1 M660.0 952.3 L680.2 954.0 L693.7 943.9 L703.9 937.8 L715.7 942.2 L720.7 955.7 L720.7 970.9 L729.2 979.3 L727.5 987.7 L714.0 989.4 M660.0 955.7 L676.9 960.1 L695.4 962.4 L700.5 954.0 L705.5 942.2 L708.9 954.0 L710.6 962.4 L715.7 965.8 L705.5 970.9 L697.1 962.4 M660.0 981.0 L670.1 984.3 L680.2 991.1" fill="none" stroke="#b9ac8c" stroke-width="1" shape-rendering="crispEdges"/>
<path d="M597.9 633.3L654.0 618.3 M603.5 638.0L658.3 623.3 M619.3 640.0L661.9 628.6 M631.0 643.1L665.5 633.9 M637.3 647.6L668.4 639.3 M647.6 651.1L671.9 644.5 M658.0 654.5L674.2 650.2 M664.2 659.0L676.4 655.8 M671.9 663.2L678.6 661.4 M691.4 626.6L698.3 639.6 M680.2 618.3L699.5 654.8 M673.2 618.1L695.6 660.1 M667.6 620.3L690.3 662.9 M606.0 642.7L636.5 668.4 M595.7 641.9L638.0 677.5 M590.2 645.2L600.4 653.7 M610.0 661.8L629.3 678.0 M589.6 652.5L617.4 675.9 M619.1 677.2L623.9 681.3 M589.5 660.2L606.1 674.2 M588.8 667.5L596.9 674.3 M595.5 689.1L608.7 679.8 M598.9 694.0L615.6 682.3 M602.9 698.5L620.1 686.4 M609.3 701.4L624.2 691.0 M606.7 709.2L609.6 707.2 M600.4 721.0L618.2 708.5 M587.2 737.5L623.3 712.2 M582.0 748.5L628.5 715.9 M586.6 752.6L631.9 720.8 M602.1 749.0L629.6 729.8 M606.7 753.2L630.8 736.3 M611.9 756.9L634.2 741.2 M623.3 756.2L638.2 745.7 M641.5 719.5L664.2 710.3 M641.1 726.1L667.7 715.4 M644.0 731.4L664.8 723.0 M632.4 701.2L639.8 717.1 M640.3 725.2L643.7 744.5 M636.8 740.0L637.6 744.2" fill="none" stroke="#232323" stroke-width="2.4" stroke-dasharray="3.6 0.8" shape-rendering="crispEdges"/>
<path d="M599.9 635.5L656.1 620.4 M608.3 639.4L659.6 625.7 M627.4 640.5L663.2 630.9 M633.7 645.1L666.8 636.2 M641.3 649.2L669.7 641.6 M654.4 651.9L672.6 647.1 M660.7 656.5L674.9 652.7 M667.6 660.8L677.8 658.1 M674.6 665.2L674.6 665.2 M684.8 619.8L701.6 651.3 M676.5 617.1L698.2 657.9 M670.6 618.7L693.3 661.3 M680.4 649.9L686.3 661.0 M599.5 640.7L639.1 674.0 M592.9 643.0L602.0 650.7 M611.7 658.8L634.2 677.7 M590.1 648.5L600.9 657.5 M604.1 660.2L626.6 679.1 M589.5 655.8L613.1 675.6 M588.9 663.1L601.2 673.5 M597.0 691.2L612.5 680.4 M600.4 696.1L617.6 684.1 M605.6 699.8L621.6 688.6 M613.6 701.5L625.1 693.5 M604.2 714.2L613.3 707.7 M596.1 727.1L620.2 710.2 M580.7 745.3L625.4 713.9 M583.5 750.6L630.0 718.1 M590.4 753.1L632.8 723.4 M604.2 750.8L630.0 732.7 M609.3 754.5L631.7 738.8 M614.5 758.2L635.7 743.3 M630.6 754.3L638.0 749.1 M640.5 722.7L665.8 712.5 M642.1 728.5L667.4 718.3 M645.6 733.6L652.1 731.0 M630.1 702.3L638.4 720.1 M637.8 725.7L641.5 747.0" fill="none" stroke="#232323" stroke-width="2.4" stroke-dasharray="4.4 0.9" shape-rendering="crispEdges"/>
<path d="" fill="none" stroke="#232323" stroke-width="2.4" stroke-dasharray="2.8 0.8" shape-rendering="crispEdges"/>
<path d="M609.6 629.0L612.3 639.2 M627.9 624.1L633.5 645.1 M646.4 619.9L655.1 652.3 M673.9 648.8L677.7 663.0 M688.4 623.3L673.5 631.1 M697.9 639.7L680.6 648.9 M595.7 641.7L589.9 648.6 M614.8 648.5L609.4 655.0 M604.4 660.9L593.2 674.3 M629.3 660.7L616.7 675.7 M640.3 677.2L640.3 677.2 M610.2 679.9L622.3 697.1 M590.6 734.1L599.9 747.3 M602.2 717.5L628.3 754.8 M620.1 710.0L631.4 726.1 M654.5 714.2L659.5 726.5 M634.5 703.8L630.1 705.8 M643.1 737.5L636.9 738.6" fill="none" stroke="#fff" stroke-width="2.2" shape-rendering="crispEdges"/>
<path d="M609.6 629.0L612.3 639.2 M627.9 624.1L633.5 645.1 M646.4 619.9L655.1 652.3 M673.9 648.8L677.7 663.0 M688.4 623.3L673.5 631.1 M697.9 639.7L680.6 648.9 M595.7 641.7L589.9 648.6 M614.8 648.5L609.4 655.0 M604.4 660.9L593.2 674.3 M629.3 660.7L616.7 675.7 M640.3 677.2L640.3 677.2 M610.2 679.9L622.3 697.1 M590.6 734.1L599.9 747.3 M602.2 717.5L628.3 754.8 M620.1 710.0L631.4 726.1 M654.5 714.2L659.5 726.5 M634.5 703.8L630.1 705.8 M643.1 737.5L636.9 738.6" fill="none" stroke="#b9ac8c" stroke-width="1" shape-rendering="crispEdges"/>
<path d="M547 524h3v2h-3zM550 522h4v3h-4zM528 540h3v3h-3zM530 539h3v3h-3zM533 537h5v3h-5zM535 536h3v3h-3zM541 532h2v3h-2zM543 530h3v3h-3zM545 529h3v3h-3zM547 528h3v3h-3zM550 526h5v2h-5zM551 523h4v3h-4zM526 547h3v2h-3zM527 544h3v3h-3zM532 540h5v3h-5zM536 539h2v3h-2zM541 534h5v3h-5zM545 533h3v2h-3zM548 531h2v2h-2zM550 530h3v2h-3zM526 549h5v3h-5zM529 547h2v3h-2zM532 546h3v2h-3zM534 544h2v3h-2zM538 542h2v3h-2zM541 538h4v3h-4zM544 537h2v3h-2zM548 533h5v3h-5zM550 532h5v3h-5zM554 530h3v3h-3zM557 529h2v2h-2zM529 550h3v2h-3zM532 549h3v3h-3zM534 548h3v3h-3zM535 546h5v3h-5zM539 544h3v3h-3zM544 540h4v3h-4zM548 537h5v3h-5zM552 535h3v3h-3zM553 533h4v3h-4zM555 532h3v2h-3zM534 554h2v3h-2zM535 553h2v3h-2zM538 551h2v3h-2zM540 550h4v2h-4zM542 548h3v2h-3zM547 544h3v2h-3zM550 542h3v3h-3zM551 541h5v2h-5zM555 538h3v3h-3zM556 537h5v3h-5zM560 536h2v2h-2zM535 557h2v2h-2zM536 556h5v3h-5zM539 554h5v3h-5zM541 551h3v3h-3zM544 550h4v3h-4zM549 546h3v3h-3zM552 545h3v2h-3zM554 542h3v3h-3zM556 541h4v3h-4zM559 539h3v3h-3zM561 538h2v3h-2zM535 561h3v2h-3zM536 559h3v3h-3zM539 558h3v2h-3zM542 555h2v3h-2zM544 554h3v2h-3zM547 552h3v3h-3zM550 549h3v3h-3zM553 547h3v3h-3zM555 545h3v2h-3zM559 543h2v3h-2zM561 541h3v3h-3zM563 540h4v3h-4zM531 567h2v3h-2zM531 565h4v3h-4zM535 564h4v3h-4zM537 562h5v3h-5zM540 560h4v3h-4zM542 558h3v3h-3zM544 557h4v3h-4zM547 556h4v2h-4zM552 551h2v3h-2zM554 550h3v3h-3zM557 547h3v3h-3zM559 546h3v3h-3zM561 545h4v2h-4zM527 572h4v3h-4zM530 570h3v3h-3zM532 569h3v3h-3zM537 566h2v3h-2zM540 565h2v3h-2zM542 562h2v3h-2zM544 561h5v3h-5zM547 559h4v3h-4zM549 557h4v3h-4zM554 554h2v3h-2zM560 549h2v3h-2zM560 548h5v3h-5zM566 544h4v2h-4zM525 581h5v2h-5zM529 579h2v3h-2zM531 576h3v3h-3zM534 575h3v2h-3zM536 573h2v3h-2zM540 569h5v3h-5zM543 567h5v2h-5zM545 566h4v3h-4zM549 565h2v3h-2zM551 562h2v3h-2zM552 560h4v3h-4zM557 557h5v3h-5zM560 555h5v3h-5zM562 554h5v3h-5zM565 552h4v3h-4zM567 550h4v3h-4zM571 548h3v3h-3zM527 583h3v3h-3zM529 580h5v3h-5zM533 579h3v3h-3zM535 578h3v2h-3zM537 576h2v2h-2zM543 572h3v3h-3zM545 569h2v3h-2zM548 568h2v2h-2zM549 566h3v3h-3zM552 565h2v3h-2zM553 564h5v2h-5zM559 560h3v3h-3zM562 558h3v3h-3zM564 556h4v2h-4zM567 555h3v2h-3zM569 552h3v3h-3zM571 551h4v2h-4zM529 585h5v3h-5zM532 582h3v3h-3zM534 581h3v2h-3zM536 580h3v2h-3zM540 578h2v3h-2zM544 574h2v3h-2zM547 573h3v2h-3zM548 571h3v2h-3zM551 568h3v3h-3zM553 567h2v3h-2zM555 565h5v3h-5zM561 562h3v3h-3zM563 561h3v2h-3zM565 559h3v3h-3zM567 557h4v3h-4zM571 554h3v3h-3zM574 552h2v3h-2zM577 550h2v3h-2zM530 587h4v3h-4zM532 586h4v3h-4zM534 584h3v3h-3zM537 582h3v3h-3zM540 581h3v3h-3zM541 580h4v2h-4zM547 575h5v3h-5zM549 574h3v3h-3zM551 572h5v2h-5zM554 570h5v3h-5zM558 569h3v3h-3zM561 564h5v3h-5zM564 563h2v3h-2zM569 560h3v3h-3zM570 558h5v3h-5zM574 558h3v2h-3zM578 553h5v3h-5zM580 550h5v3h-5zM583 549h3v3h-3zM586 547h4v2h-4zM589 546h2v3h-2zM591 543h2v3h-2zM532 589h5v2h-5zM535 587h5v3h-5zM538 587h2v2h-2zM541 585h3v2h-3zM543 583h2v3h-2zM548 579h2v2h-2zM550 577h3v3h-3zM553 575h3v3h-3zM554 574h5v3h-5zM557 571h2v3h-2zM560 570h3v3h-3zM564 567h5v3h-5zM567 565h5v2h-5zM568 564h5v2h-5zM570 562h5v3h-5zM575 559h2v3h-2zM576 558h5v3h-5zM581 555h4v3h-4zM584 552h2v2h-2zM588 550h2v3h-2zM592 547h3v3h-3zM593 546h4v3h-4zM597 542h5v2h-5zM601 541h3v3h-3zM603 539h2v3h-2zM604 536h5v3h-5zM608 535h2v3h-2zM610 533h5v3h-5zM615 529h4v3h-4zM618 528h2v3h-2zM621 527h2v2h-2zM623 524h2v3h-2zM624 522h5v3h-5zM626 521h4v2h-4zM633 518h2v3h-2zM634 516h3v3h-3zM535 595h4v3h-4zM536 594h5v2h-5zM539 591h3v3h-3zM540 589h5v3h-5zM543 587h5v3h-5zM552 583h3v3h-3zM555 579h3v2h-3zM559 577h3v2h-3zM561 576h3v2h-3zM562 575h5v2h-5zM568 571h4v3h-4zM570 569h3v2h-3zM574 566h2v3h-2zM576 566h2v2h-2zM578 563h2v3h-2zM581 562h2v3h-2zM584 558h4v3h-4zM587 556h5v3h-5zM591 554h2v3h-2zM591 553h5v3h-5zM594 551h4v3h-4zM597 550h3v3h-3zM603 546h3v3h-3zM603 543h5v3h-5zM607 542h3v3h-3zM608 540h5v2h-5zM612 538h2v3h-2zM620 533h2v2h-2zM621 531h4v3h-4zM627 528h2v3h-2zM629 527h4v2h-4zM631 525h3v2h-3zM636 520h5v3h-5zM641 518h3v3h-3zM643 516h5v3h-5zM648 512h3v3h-3zM538 595h3v3h-3zM539 594h4v2h-4zM543 592h3v3h-3zM547 588h4v3h-4zM551 586h3v3h-3zM553 585h3v3h-3zM556 583h3v3h-3zM558 582h3v3h-3zM561 580h3v2h-3zM561 578h4v3h-4zM565 576h3v2h-3zM571 573h2v2h-2zM571 571h5v3h-5zM575 569h4v3h-4zM577 568h4v2h-4zM579 565h5v3h-5zM582 564h4v2h-4zM585 561h5v2h-5zM590 558h3v3h-3zM592 556h5v3h-5zM593 555h5v3h-5zM597 553h3v3h-3zM599 552h3v2h-3zM602 549h2v3h-2zM604 548h3v2h-3zM607 546h4v3h-4zM608 545h2v2h-2zM610 543h3v2h-3zM613 540h5v3h-5zM616 539h3v3h-3zM622 533h5v3h-5zM625 533h3v3h-3zM628 530h3v3h-3zM633 527h4v3h-4zM637 523h3v3h-3zM641 521h2v3h-2zM642 520h3v3h-3zM648 515h2v3h-2zM649 514h4v3h-4zM540 598h2v3h-2zM542 597h3v3h-3zM542 595h5v3h-5zM547 593h4v3h-4zM549 591h5v3h-5zM552 588h5v3h-5zM555 585h5v3h-5zM559 584h3v3h-3zM561 583h3v3h-3zM564 580h3v3h-3zM565 579h3v3h-3zM570 576h4v3h-4zM576 572h2v3h-2zM577 570h4v3h-4zM580 569h3v3h-3zM582 566h5v2h-5zM588 564h3v2h-3zM591 561h3v3h-3zM593 559h2v3h-2zM595 557h4v3h-4zM597 556h3v3h-3zM600 554h2v3h-2zM604 552h4v2h-4zM606 548h4v3h-4zM610 547h3v3h-3zM612 545h3v3h-3zM614 544h3v3h-3zM616 542h5v2h-5zM622 538h3v3h-3zM623 536h3v3h-3zM626 534h5v3h-5zM628 533h5v3h-5zM631 531h3v3h-3zM632 529h5v3h-5zM638 526h4v3h-4zM641 523h3v3h-3zM644 522h2v3h-2zM645 521h5v2h-5zM648 519h3v3h-3zM651 516h3v3h-3zM656 514h3v3h-3zM542 601h3v3h-3zM545 598h2v3h-2zM555 589h5v3h-5zM559 588h3v3h-3zM566 582h4v3h-4zM569 581h3v3h-3zM574 578h2v3h-2zM576 575h3v3h-3zM579 573h2v3h-2zM581 570h5v3h-5zM586 569h3v2h-3zM593 562h4v3h-4zM596 561h2v2h-2zM596 560h5v3h-5zM599 558h3v3h-3zM609 550h5v3h-5zM613 549h3v3h-3zM614 548h4v3h-4zM616 545h3v3h-3zM619 544h3v3h-3zM628 538h2v3h-2zM632 534h2v3h-2zM633 533h4v2h-4zM635 531h5v3h-5zM644 526h5v3h-5zM645 524h3v3h-3zM649 522h2v3h-2zM652 522h2v2h-2zM659 515h3v3h-3zM544 601h3v3h-3zM546 600h5v3h-5zM548 598h3v3h-3zM552 597h3v3h-3zM559 592h4v3h-4zM561 590h3v3h-3zM562 587h5v3h-5zM565 586h3v3h-3zM569 585h2v3h-2zM569 583h4v3h-4zM575 579h4v3h-4zM578 577h3v3h-3zM579 575h5v3h-5zM583 574h2v3h-2zM584 572h3v3h-3zM587 571h5v2h-5zM591 568h3v3h-3zM592 566h4v3h-4zM595 564h2v3h-2zM597 564h3v3h-3zM599 562h5v3h-5zM601 559h5v3h-5zM607 556h4v3h-4zM609 555h3v2h-3zM612 553h4v3h-4zM614 551h4v3h-4zM615 549h5v3h-5zM619 547h4v3h-4zM626 541h5v3h-5zM629 540h2v2h-2zM630 539h5v3h-5zM633 537h3v3h-3zM635 535h4v3h-4zM638 534h3v2h-3zM644 530h2v3h-2zM646 527h3v3h-3zM649 526h3v3h-3zM649 525h5v2h-5zM653 524h3v3h-3zM654 522h5v2h-5zM658 519h5v3h-5zM662 517h2v3h-2zM548 605h5v2h-5zM551 602h4v3h-4zM554 601h4v3h-4zM559 597h3v3h-3zM563 594h4v3h-4zM567 593h3v2h-3zM568 591h3v3h-3zM570 589h4v3h-4zM578 583h4v3h-4zM581 582h3v3h-3zM583 580h3v3h-3zM585 578h4v2h-4zM589 576h3v3h-3zM595 570h4v3h-4zM597 569h3v3h-3zM599 567h3v3h-3zM603 566h3v3h-3zM605 565h2v3h-2zM611 560h2v3h-2zM612 559h3v3h-3zM614 558h3v3h-3zM616 555h5v3h-5zM621 551h4v3h-4zM631 545h5v3h-5zM634 543h4v3h-4zM637 539h4v3h-4zM651 530h4v3h-4zM654 528h4v3h-4zM656 527h2v3h-2zM659 526h2v3h-2zM551 607h2v2h-2zM553 606h3v3h-3zM556 605h2v2h-2zM562 598h5v3h-5zM565 597h2v3h-2zM568 595h3v3h-3zM570 593h3v3h-3zM571 592h5v2h-5zM576 590h2v3h-2zM579 586h3v2h-3zM581 584h5v3h-5zM584 583h4v3h-4zM587 580h3v3h-3zM589 579h3v3h-3zM597 573h3v3h-3zM601 570h4v3h-4zM604 568h3v3h-3zM606 567h3v3h-3zM608 565h4v3h-4zM615 561h2v3h-2zM615 560h4v2h-4zM618 557h5v3h-5zM622 556h3v3h-3zM623 554h2v3h-2zM625 552h4v3h-4zM554 609h2v3h-2zM556 607h3v3h-3zM558 606h4v2h-4zM563 602h4v2h-4zM565 600h5v3h-5zM569 597h2v3h-2zM570 597h4v2h-4zM573 594h4v3h-4zM576 593h2v3h-2zM581 590h2v2h-2zM583 587h2v3h-2zM586 586h2v3h-2zM588 583h3v3h-3zM590 582h3v3h-3zM592 580h5v3h-5zM596 577h5v2h-5zM600 574h3v3h-3zM602 574h3v2h-3zM606 570h4v3h-4zM610 568h3v2h-3zM614 565h2v3h-2zM617 561h5v3h-5zM621 559h3v3h-3zM568 602h4v3h-4zM572 600h2v3h-2zM572 598h3v3h-3zM576 596h3v3h-3zM577 594h4v3h-4zM582 590h5v3h-5zM587 589h2v3h-2zM588 588h2v3h-2zM589 585h5v3h-5zM593 583h4v3h-4zM594 582h5v2h-5zM600 580h3v2h-3zM602 577h3v3h-3zM604 575h3v2h-3zM606 574h5v2h-5zM608 571h5v3h-5zM612 570h3v3h-3zM568 605h5v3h-5zM571 603h5v2h-5zM574 600h3v3h-3zM577 599h2v3h-2zM578 597h5v3h-5zM583 594h5v3h-5zM585 592h5v3h-5zM589 590h4v2h-4zM590 589h5v2h-5zM594 587h2v3h-2zM596 584h3v3h-3zM601 582h2v3h-2zM605 579h2v3h-2zM606 578h2v3h-2zM607 576h4v3h-4zM611 574h3v3h-3zM575 606h2v3h-2zM576 606h3v3h-3zM579 604h3v3h-3zM587 598h3v3h-3zM590 596h3v3h-3zM590 594h5v3h-5zM594 593h2v3h-2zM596 592h3v2h-3zM597 589h5v3h-5zM603 586h3v3h-3zM606 583h3v3h-3zM595 595h2v3h-2zM564 506h5v3h-5zM566 504h5v3h-5zM569 502h4v3h-4zM572 500h3v2h-3zM573 499h5v3h-5zM566 508h4v3h-4zM569 506h3v3h-3zM576 501h3v3h-3zM566 512h5v3h-5zM570 510h2v3h-2zM573 507h3v2h-3zM568 514h2v2h-2zM571 511h3v3h-3zM574 511h2v2h-2zM576 509h3v3h-3zM573 513h5v3h-5zM577 511h4v2h-4zM580 509h3v3h-3zM578 517h4v3h-4zM580 515h2v3h-2zM583 514h2v3h-2zM585 511h3v3h-3zM579 520h2v3h-2zM581 518h4v2h-4zM585 514h4v3h-4zM588 513h2v3h-2zM581 521h2v3h-2zM584 520h4v2h-4zM586 518h3v3h-3zM588 516h4v3h-4zM582 525h3v3h-3zM585 523h2v3h-2zM588 519h3v3h-3zM584 527h4v2h-4zM587 525h2v3h-2zM589 523h4v3h-4zM587 530h4v3h-4zM591 529h3v2h-3zM592 527h5v3h-5zM593 526h5v3h-5zM589 533h3v3h-3zM590 532h4v3h-4zM593 529h4v3h-4zM596 528h2v3h-2zM591 535h3v3h-3zM594 533h3v2h-3zM596 532h3v2h-3zM599 530h3v3h-3zM604 496h3v2h-3zM603 500h4v3h-4zM604 498h4v3h-4zM610 494h3v3h-3zM612 496h4v3h-4zM614 494h5v3h-5zM605 504h3v3h-3zM608 504h3v3h-3zM610 502h2v2h-2zM614 499h4v3h-4zM616 497h3v3h-3zM619 495h4v2h-4zM620 493h5v3h-5zM625 490h3v3h-3zM625 490h5v2h-5zM632 487h3v2h-3zM633 485h5v3h-5zM606 509h5v3h-5zM610 509h3v3h-3zM611 507h4v3h-4zM617 504h3v3h-3zM619 501h4v3h-4zM621 500h4v3h-4zM624 497h3v3h-3zM629 494h4v3h-4zM632 492h5v3h-5zM637 489h2v3h-2zM642 485h2v3h-2zM643 484h3v2h-3zM645 483h4v2h-4zM611 512h3v2h-3zM615 508h3v3h-3zM618 506h3v2h-3zM619 503h5v3h-5zM625 500h3v3h-3zM628 499h2v2h-2zM631 497h3v2h-3zM635 493h3v3h-3zM638 491h2v3h-2zM640 490h2v3h-2zM642 488h3v3h-3zM644 486h3v3h-3zM653 481h3v3h-3zM654 480h3v3h-3zM612 515h3v3h-3zM614 513h3v3h-3zM615 511h3v3h-3zM622 505h3v3h-3zM625 504h4v3h-4zM628 501h2v3h-2zM631 500h2v3h-2zM632 499h3v2h-3zM636 495h5v3h-5zM640 494h3v2h-3zM643 491h2v3h-2zM646 488h3v3h-3zM649 486h3v3h-3zM655 483h2v3h-2zM657 481h2v2h-2zM658 479h3v3h-3zM662 478h2v3h-2zM612 517h4v2h-4zM614 515h4v3h-4zM617 514h3v3h-3zM622 510h4v3h-4zM626 507h3v3h-3zM628 505h4v3h-4zM633 501h3v3h-3zM637 498h5v3h-5zM641 497h4v3h-4zM646 493h2v3h-2zM648 491h4v3h-4zM655 486h3v3h-3zM659 484h3v3h-3zM662 480h3v3h-3zM615 518h4v3h-4zM618 516h4v3h-4zM621 516h2v2h-2zM624 513h4v2h-4zM628 510h2v3h-2zM629 507h3v3h-3zM631 506h4v3h-4zM634 505h4v3h-4zM642 499h3v3h-3zM644 498h3v2h-3zM648 496h2v3h-2zM649 494h3v3h-3zM651 492h5v3h-5zM658 487h4v3h-4zM662 485h3v3h-3zM664 484h3v3h-3zM620 521h5v2h-5zM638 508h3v2h-3zM640 508h3v3h-3zM647 501h4v3h-4zM651 499h4v3h-4zM654 497h3v3h-3zM661 491h3v3h-3zM668 487h3v3h-3zM637 512h5v3h-5zM639 511h5v3h-5zM644 507h5v3h-5zM648 505h3v3h-3zM650 503h3v3h-3zM653 501h3v3h-3zM655 500h3v2h-3zM656 497h5v3h-5zM662 494h3v3h-3zM665 493h3v3h-3zM668 491h2v3h-2zM669 488h3v3h-3zM640 513h4v3h-4zM647 508h3v2h-3zM650 507h2v3h-2zM652 505h4v2h-4zM655 504h3v2h-3zM658 500h5v3h-5zM663 496h5v3h-5zM667 494h3v3h-3zM669 493h3v3h-3zM672 491h2v3h-2zM657 505h5v3h-5zM660 504h3v2h-3zM662 501h3v3h-3zM667 498h5v3h-5zM671 496h2v3h-2zM671 494h5v3h-5zM662 505h3v3h-3zM667 501h4v3h-4zM670 499h3v3h-3zM672 498h4v3h-4zM674 496h3v3h-3zM670 505h3v3h-3zM675 502h3v3h-3zM678 500h2v3h-2zM666 470h2v2h-2zM666 473h2v1h-2zM672 469h2v2h-2zM673 468h3v2h-3zM668 475h1v2h-1zM670 473h3v2h-3zM673 471h1v2h-1zM676 470h2v1h-2zM677 468h2v2h-2zM671 476h2v2h-2zM673 475h2v2h-2zM681 470h3v2h-3zM670 481h1v1h-1zM675 477h2v2h-2zM678 476h1v2h-1zM675 484h2v2h-2zM680 480h2v2h-2zM681 478h3v2h-3zM685 478h2v1h-2zM674 487h3v2h-3zM677 486h2v2h-2zM683 482h1v1h-1zM677 489h2v2h-2zM682 486h2v2h-2zM687 481h1v2h-1zM655 544h4v3h-4zM658 542h3v3h-3zM652 550h3v3h-3zM654 549h3v3h-3zM654 547h5v2h-5zM658 545h3v3h-3zM661 543h2v3h-2zM653 552h4v2h-4zM656 550h4v2h-4zM659 548h3v2h-3zM661 546h3v3h-3zM666 543h3v3h-3zM655 555h3v3h-3zM659 551h4v3h-4zM661 549h5v3h-5zM663 547h5v3h-5zM669 544h3v3h-3zM673 543h3v2h-3zM659 555h3v3h-3zM664 552h3v3h-3zM665 551h4v3h-4zM672 547h2v3h-2zM673 546h3v2h-3zM647 574h1v1h-1zM651 569h1v2h-1zM654 568h2v2h-2zM656 567h2v2h-2zM659 565h1v2h-1zM649 574h3v2h-3zM651 573h3v1h-3zM657 570h3v1h-3zM660 568h1v1h-1zM663 564h2v1h-2zM666 563h3v2h-3zM641 584h3v2h-3zM650 578h2v2h-2zM664 568h1v2h-1zM668 566h1v1h-1zM644 587h2v2h-2zM647 584h2v2h-2zM649 583h1v2h-1zM651 581h2v2h-2zM663 572h3v2h-3zM665 571h2v2h-2zM668 568h1v1h-1zM648 587h2v2h-2zM661 576h2v2h-2zM664 575h1v2h-1zM673 565h1v2h-1zM678 565h2v2h-2zM681 566h3v2h-3zM683 570h1v1h-1zM526 595h1v2h-1zM526 598h2v2h-2zM528 596h2v2h-2zM525 603h1v1h-1zM530 600h2v1h-2zM532 597h2v2h-2zM534 596h2v1h-2zM525 606h2v2h-2zM529 604h1v2h-1zM530 609h2v1h-2zM536 605h2v2h-2zM529 613h2v2h-2zM533 613h3v2h-3zM535 612h2v2h-2zM540 609h3v1h-3zM544 610h2v2h-2zM533 621h2v1h-2zM536 619h1v2h-1zM540 616h2v1h-2zM543 615h1v1h-1zM546 612h2v2h-2zM536 625h2v1h-2zM538 624h2v2h-2zM540 625h3v2h-3zM545 622h1v2h-1zM533 617h5v2h-5zM537 619h4v3h-4zM538 627h3v3h-3zM545 628h3v2h-3zM517 632h1v2h-1zM522 628h1v2h-1zM548 502h1v2h-1zM732 458h3v3h-3zM733 456h3v3h-3zM725 466h5v3h-5zM728 464h4v3h-4zM730 463h4v3h-4zM731 460h5v3h-5zM734 459h5v3h-5zM737 457h5v3h-5zM696 496h4v2h-4zM728 468h3v3h-3zM731 466h3v3h-3zM733 463h4v3h-4zM736 462h2v3h-2zM738 460h4v3h-4zM739 458h4v3h-4zM685 508h4v3h-4zM687 506h4v3h-4zM692 502h3v3h-3zM695 501h2v3h-2zM697 498h3v3h-3zM699 496h3v3h-3zM700 495h5v3h-5zM703 493h5v2h-5zM706 492h3v2h-3zM707 488h5v3h-5zM710 487h2v2h-2zM712 484h5v2h-5zM715 483h4v3h-4zM716 481h5v3h-5zM720 480h3v2h-3zM722 478h3v2h-3zM725 475h3v3h-3zM729 471h3v3h-3zM732 469h3v3h-3zM733 468h3v3h-3zM735 465h3v3h-3zM741 462h3v3h-3zM689 510h4v2h-4zM691 507h3v3h-3zM693 505h4v3h-4zM695 503h3v3h-3zM700 499h3v2h-3zM703 497h3v3h-3zM705 495h3v3h-3zM706 493h3v3h-3zM709 491h5v2h-5zM711 490h3v3h-3zM715 486h4v2h-4zM720 484h2v3h-2zM722 482h2v2h-2zM723 479h5v3h-5zM726 478h2v3h-2zM727 477h4v2h-4zM733 473h2v2h-2zM734 469h5v3h-5zM739 467h3v3h-3zM742 465h3v3h-3zM743 462h3v3h-3zM690 514h5v2h-5zM699 508h2v2h-2zM705 502h3v3h-3zM707 500h4v3h-4zM710 498h3v3h-3zM714 494h3v3h-3zM717 491h4v2h-4zM724 487h3v2h-3zM725 485h3v2h-3zM728 483h3v2h-3zM730 481h3v3h-3zM735 477h3v3h-3zM740 473h2v3h-2zM740 471h5v3h-5zM742 469h4v3h-4zM747 467h2v3h-2zM695 514h2v3h-2zM695 513h5v3h-5zM698 512h4v3h-4zM706 505h2v3h-2zM707 504h4v3h-4zM710 501h4v3h-4zM711 499h4v3h-4zM715 497h4v3h-4zM717 496h3v3h-3zM721 492h3v2h-3zM726 488h3v2h-3zM728 486h2v3h-2zM730 484h3v3h-3zM734 482h2v2h-2zM738 479h4v3h-4zM740 477h2v2h-2zM742 474h3v3h-3zM744 473h3v2h-3zM747 470h3v3h-3zM748 468h5v2h-5zM697 516h3v3h-3zM701 512h5v3h-5zM706 508h2v2h-2zM709 506h2v2h-2zM711 505h2v3h-2zM713 502h3v3h-3zM715 501h5v3h-5zM717 499h4v3h-4zM722 496h4v3h-4zM724 494h4v2h-4zM727 492h3v3h-3zM729 490h3v2h-3zM732 485h5v3h-5zM737 482h5v3h-5zM742 479h2v2h-2zM743 478h3v3h-3zM744 475h4v3h-4zM748 473h2v3h-2zM751 472h2v2h-2zM709 509h3v3h-3zM710 508h5v2h-5zM713 506h5v2h-5zM716 504h4v3h-4zM717 503h5v3h-5zM719 501h4v2h-4zM724 496h5v3h-5zM726 494h5v3h-5zM730 493h4v3h-4zM731 490h4v3h-4zM733 490h5v2h-5zM736 486h5v3h-5zM741 483h5v3h-5zM743 481h4v3h-4zM746 478h2v3h-2zM712 510h4v3h-4zM716 509h3v3h-3zM717 507h3v3h-3zM719 504h5v3h-5zM722 502h3v3h-3zM725 499h5v2h-5zM728 495h5v3h-5zM731 495h4v2h-4zM734 493h3v3h-3zM737 491h2v3h-2zM738 489h2v3h-2zM725 507h3v3h-3zM729 503h2v3h-2zM680 509h2v3h-2zM673 518h4v3h-4zM676 515h3v3h-3zM678 514h3v3h-3zM679 511h5v3h-5zM683 509h3v3h-3zM673 521h4v3h-4zM676 520h3v3h-3zM677 518h5v3h-5zM682 514h3v3h-3zM685 511h2v3h-2zM674 524h2v3h-2zM676 523h4v3h-4zM677 521h5v3h-5zM681 518h3v3h-3zM685 515h3v3h-3zM688 513h2v3h-2zM674 528h4v3h-4zM676 526h3v3h-3zM678 524h5v3h-5zM681 522h3v3h-3zM686 518h3v2h-3zM689 516h3v3h-3zM691 515h2v2h-2zM679 530h3v3h-3zM680 528h5v3h-5zM684 527h3v2h-3zM686 526h3v3h-3zM691 522h3v3h-3zM693 519h3v3h-3zM680 533h4v3h-4zM681 532h4v2h-4zM684 530h5v2h-5zM688 527h2v3h-2zM691 524h4v3h-4zM694 523h5v2h-5zM683 536h3v2h-3zM685 534h2v3h-2zM687 532h4v3h-4zM689 531h3v3h-3zM695 526h2v3h-2zM697 524h3v3h-3zM698 523h5v3h-5zM684 537h5v3h-5zM688 535h2v3h-2zM689 533h4v2h-4zM691 531h5v2h-5zM696 528h3v3h-3zM699 527h3v2h-3zM686 539h5v3h-5zM688 538h5v3h-5zM692 536h2v2h-2zM694 534h3v3h-3zM697 531h4v2h-4zM689 543h5v3h-5zM692 542h4v2h-4zM696 540h2v3h-2zM693 544h4v2h-4zM695 542h4v3h-4zM695 546h3v3h-3zM697 545h5v2h-5zM770 478h4v3h-4zM775 482h4v3h-4zM757 470h4v3h-4zM759 472h4v3h-4zM761 473h4v3h-4zM764 475h4v3h-4zM766 477h4v3h-4zM770 481h4v3h-4zM773 483h4v3h-4zM775 485h4v3h-4zM755 472h4v3h-4zM757 474h4v3h-4zM759 475h4v3h-4zM762 477h4v3h-4zM763 480h4v3h-4zM769 484h4v3h-4zM770 485h4v3h-4zM773 488h4v3h-4zM754 475h4v3h-4zM756 476h4v3h-4zM758 478h4v3h-4zM760 480h4v3h-4zM762 482h4v3h-4zM766 486h4v3h-4zM769 488h4v3h-4zM772 490h4v3h-4zM750 477h4v3h-4zM753 478h4v3h-4zM756 480h4v3h-4zM757 482h4v3h-4zM760 484h4v3h-4zM765 488h4v3h-4zM767 490h4v3h-4zM769 491h4v3h-4zM750 481h4v3h-4zM753 482h4v3h-4zM756 484h4v3h-4zM758 486h4v3h-4zM763 490h4v3h-4zM764 491h4v3h-4zM767 493h4v3h-4zM757 489h4v3h-4zM761 492h4v3h-4zM710 542h3v3h-3zM712 539h3v3h-3zM713 537h5v3h-5zM710 545h2v3h-2zM711 543h5v2h-5zM715 542h2v3h-2zM716 540h4v3h-4zM719 537h3v3h-3zM712 547h4v3h-4zM715 545h2v3h-2zM716 542h4v3h-4zM718 542h4v3h-4zM722 539h2v2h-2zM714 550h4v2h-4zM718 546h2v3h-2zM719 545h3v3h-3zM725 541h2v3h-2zM716 552h4v2h-4zM719 549h3v3h-3zM720 547h5v2h-5zM723 545h3v3h-3zM725 543h3v3h-3zM728 543h3v2h-3zM721 554h5v2h-5zM723 551h5v3h-5zM726 550h4v2h-4zM730 547h2v3h-2zM732 544h2v3h-2zM726 553h3v3h-3zM729 551h3v3h-3zM731 549h3v3h-3zM733 547h3v3h-3zM730 554h3v3h-3zM732 551h4v3h-4zM736 549h2v3h-2zM700 558h2v2h-2zM708 555h1v2h-1zM705 562h2v1h-2zM711 557h2v1h-2zM707 563h1v2h-1zM712 558h3v1h-3zM735 443h4v3h-4zM670 568h3v2h-3zM678 569h2v2h-2zM674 572h3v2h-3zM683 569h1v2h-1zM570 602h4v3h-4zM559 619h3v3h-3zM562 620h3v3h-3zM623 619h2v2h-2zM537 615h3v3h-3zM536 619h5v3h-5zM540 617h3v3h-3zM541 615h3v3h-3zM535 624h2v3h-2zM538 622h2v3h-2zM540 619h4v2h-4zM541 623h3v3h-3zM544 627h2v2h-2zM548 623h5v3h-5zM543 630h3v3h-3zM548 627h4v3h-4zM534 614h3v1h-3zM535 617h3v2h-3zM513 626h2v2h-2zM515 625h2v2h-2zM514 629h1v2h-1zM518 625h2v2h-2zM517 629h1v2h-1zM517 633h3v2h-3zM519 632h3v2h-3zM508 641h2v2h-2zM508 644h3v2h-3zM511 642h2v2h-2zM484 663h2v1h-2zM487 660h3v2h-3zM493 657h1v1h-1zM499 652h2v1h-2zM486 666h1v2h-1zM491 662h1v2h-1zM493 660h2v2h-2zM496 659h1v2h-1zM487 668h3v1h-3zM491 665h1v2h-1zM496 661h1v2h-1zM499 658h3v1h-3zM501 657h3v2h-3zM504 655h2v2h-2zM496 665h2v1h-2zM504 659h2v2h-2zM472 673h3v2h-3zM474 675h3v2h-3zM475 679h2v2h-2zM479 680h2v1h-2zM522 673h2v3h-2zM523 675h5v3h-5zM525 675h5v3h-5zM533 675h3v3h-3zM526 680h3v3h-3zM530 679h2v3h-2zM534 678h3v2h-3zM557 640h2v2h-2zM555 645h2v1h-2zM562 643h2v2h-2zM547 660h2v2h-2zM553 654h3v2h-3zM558 652h3v1h-3zM587 622h4v2h-4zM589 620h4v2h-4zM570 636h5v3h-5zM438 641h5v4h-5zM460 643h4v7h-4zM442 659h4v3h-4zM481 594h4v3h-4zM481 599h1v1h-1zM493 578h1v1h-1zM471 690h2v2h-2zM507 687h2v2h-2zM512 679h3v2h-3zM487 701h6v4h-6zM479 681h2v2h-2zM555 614h8v9h-8zM575 629h3v3h-3zM629 575h11v5h-11zM611 588h5v7h-5zM608 599h8v8h-8zM625 587h5v4h-5zM556 615h6v8h-6zM640 443h3v2h-3zM637 588h4v3h-4zM646 601h3v2h-3zM659 599h3v2h-3zM661 599h3v2h-3zM663 598h3v2h-3zM665 597h3v2h-3zM666 597h3v2h-3zM668 596h3v2h-3zM670 595h3v2h-3zM672 595h3v2h-3zM648 655h7v6h-7zM652 663h1v2h-1zM639 695h9v6h-9zM636 700h4v3h-4zM646 696h4v2h-4zM475 489h4v3h-4zM473 495h3v3h-3zM471 499h2v2h-2zM467 505h3v3h-3zM447 520h4v2h-4zM461 533h2v2h-2zM494 537h3v2h-3zM499 547h2v2h-2zM502 547h1v2h-1zM509 548h4v1h-4zM481 593h4v4h-4zM481 599h1v1h-1zM439 641h4v4h-4zM460 643h5v7h-5zM442 658h4v3h-4zM493 578h1v2h-1zM541 501h7v3h-7zM540 503h3v1h-3zM628 389h2v2h-2zM605 399h2v3h-2zM594 414h3v1h-3zM598 420h5v2h-5zM621 426h3v4h-3zM864 436h3v2h-3zM864 443h4v2h-4zM931 492h3v4h-3zM936 494h4v2h-4zM456 821h10v3h-10zM451 827h5v2h-5zM464 817h5v2h-5zM525 847h2v4h-2zM488 701h5v4h-5zM471 690h2v2h-2zM507 687h2v2h-2zM478 681h3v3h-3zM527 680h6v3h-6zM866 822h3v2h-3zM864 755h3v2h-3zM715 980h2v3h-2zM720 984h2v1h-2zM523 984h3v2h-3zM656 433h2v2h-2zM669 434h6v4h-6zM640 444h3v2h-3zM736 433h4v8h-4z" fill="#232323" shape-rendering="crispEdges"/>
<path d="M532.8 563.3L564.6 607.0 M538.1 534.8L587.5 602.8 M557.4 525.7L568.6 541.1 M572.1 545.9L603.3 588.8 M596.2 543.3L615.6 570.0 M613.7 531.7L628.4 552.0 M630.7 519.4L643.7 537.2 M650.6 511.1L661.8 526.5 M531.2 555.6L562.7 532.7 M527.2 579.1L571.7 546.7 M534.6 594.3L649.5 510.9 M546.8 606.0L665.8 519.6 M572.8 607.8L610.8 580.2 M574.8 518.9L587.0 510.0 M586.3 531.2L594.4 525.3 M607.3 493.7L626.6 520.4 M628.9 487.8L646.6 512.1 M650.6 482.0L669.4 507.9 M607.2 509.8L641.2 485.1 M617.1 523.3L668.0 486.2 M665.7 508.5L679.4 498.5 M668.6 482.3L675.0 491.2 M686.7 471.6L689.1 474.9 M670.0 486.2L688.6 472.7 M664.3 543.2L672.0 553.7 M663.5 558.3L678.0 547.8 M649.7 571.8L657.4 582.4 M676.2 566.4L679.7 571.3 M542.0 602.7L552.0 616.5 M526.3 610.4L539.3 601.0 M535.3 624.5L552.3 612.1 M540.1 617.3L548.3 628.7 M542.1 630.0L548.6 625.3 M516.5 626.6L520.7 632.3 M695.9 499.5L707.5 513.3 M712.0 486.0L729.4 506.7 M726.8 471.0L741.6 488.6 M748.1 463.6L751.9 468.2 M690.9 513.5L749.1 464.6 M719.3 511.5L739.2 494.7 M678.9 512.6L698.8 536.3 M677.7 531.9L694.5 517.8 M689.9 543.4L699.9 535.0 M770.7 478.7L760.4 491.0 M758.8 471.5L777.1 486.9 M755.0 476.0L773.4 491.4 M751.3 480.4L769.7 495.8 M712.3 551.2L712.3 551.2 M720.0 554.5L731.5 544.8 M704.5 555.0L711.6 563.4 M713.1 563.8L719.2 558.7 M684.8 565.6L686.8 571.3 M601.8 637.0L657.2 622.1 M614.2 639.9L660.8 627.4 M629.3 642.1L664.4 632.6 M635.5 646.6L668.0 637.9 M644.5 650.4L670.9 643.3 M656.2 653.5L673.8 648.8 M663.2 657.8L676.0 654.4 M670.1 662.2L678.3 660.0 M682.1 618.9L700.5 653.5 M674.5 617.4L696.5 658.8 M668.9 619.6L691.5 662.2 M597.1 641.3L640.0 677.3 M591.1 644.1L600.2 651.7 M611.5 661.2L631.4 677.8 M590.0 650.9L624.8 680.2 M589.3 658.2L609.2 674.8 M588.7 665.5L598.9 674.0 M598.1 692.8L614.7 681.1 M602.1 697.3L618.7 685.7 M607.8 700.6L623.3 689.8 M622.2 697.9L625.6 695.5 M601.8 718.2L616.2 708.1 M591.5 732.7L621.9 711.4 M581.8 746.9L627.1 715.1 M584.6 752.2L631.1 719.7 M601.3 747.9L630.5 727.4 M605.9 752.0L630.5 734.7 M611.0 755.7L633.4 740.0 M619.1 757.4L637.4 744.5 M640.6 724.8L666.5 714.3 M643.5 730.1L666.2 720.9 M635.8 726.0L639.2 745.3 M563.3 604.3L566.2 608.4 M562.2 615.7L564.5 619.0 M621.9 611.1L625.4 615.9 M535.3 622.4L541.8 631.3 M540.0 629.5L549.8 622.4 M529.6 614.5L532.6 618.6 M521.9 625.5L524.3 628.7 M510.7 636.8L513.1 640.1 M494.3 653.2L501.4 663.0 M520.3 675.2L521.7 678.9 M561.8 640.0L563.6 642.4 M553.1 656.4L554.3 658.0 M575.3 635.4L575.9 636.2" fill="none" stroke="#b9ac8c" stroke-width="1" shape-rendering="crispEdges"/>
<path d="M531 540h1v1h-1zM534 537h1v1h-1zM548 529h1v1h-1zM527 550h3v1h-3zM562 542h1v1h-1zM538 563h3v1h-3zM533 570h1v1h-1zM532 577h1v1h-1zM541 570h3v1h-3zM550 565h1v1h-1zM552 562h1v1h-1zM568 550h1v1h-1zM528 584h1v1h-1zM534 580h1v1h-1zM530 586h3v1h-3zM555 571h3v1h-3zM565 563h1v1h-1zM570 561h1v1h-1zM579 554h3v1h-3zM581 551h3v1h-3zM561 571h1v1h-1zM565 568h3v1h-3zM571 563h3v1h-3zM605 537h3v1h-3zM536 596h2v1h-2zM544 588h3v1h-3zM553 583h1v1h-1zM585 559h2v1h-2zM598 551h1v1h-1zM604 544h3v1h-3zM608 542h1v1h-1zM622 532h2v1h-2zM642 519h1v1h-1zM539 596h1v1h-1zM554 586h1v1h-1zM559 583h1v1h-1zM580 565h1v1h-1zM586 561h1v1h-1zM594 555h1v1h-1zM598 554h1v1h-1zM614 541h3v1h-3zM623 534h3v1h-3zM650 515h2v1h-2zM560 585h1v1h-1zM565 581h1v1h-1zM578 570h1v1h-1zM594 559h1v1h-1zM598 557h1v1h-1zM607 549h2v1h-2zM611 548h1v1h-1zM623 539h1v1h-1zM629 534h3v1h-3zM652 517h1v1h-1zM657 515h1v1h-1zM577 576h1v1h-1zM582 571h3v1h-3zM594 563h2v1h-2zM636 531h1v1h-1zM646 525h1v1h-1zM660 516h1v1h-1zM547 601h3v1h-3zM549 599h1v1h-1zM560 593h2v1h-2zM579 578h1v1h-1zM598 565h1v1h-1zM602 560h3v1h-3zM613 554h2v1h-2zM620 548h2v1h-2zM647 528h1v1h-1zM654 525h1v1h-1zM659 520h3v1h-3zM555 602h2v1h-2zM579 584h2v1h-2zM590 577h1v1h-1zM632 546h3v1h-3zM635 544h2v1h-2zM563 599h3v1h-3zM582 585h3v1h-3zM566 600h1v1h-1zM611 568h1v1h-1zM622 560h1v1h-1zM569 603h2v1h-2zM591 589h1v1h-1zM597 585h1v1h-1zM602 582h1v1h-1zM608 576h1v1h-1zM612 575h1v1h-1zM591 595h3v1h-3zM572 511h1v1h-1zM577 510h1v1h-1zM574 514h3v1h-3zM581 510h1v1h-1zM579 517h1v1h-1zM586 511h1v1h-1zM589 520h1v1h-1zM588 530h1v1h-1zM590 534h1v1h-1zM605 499h2v1h-2zM611 494h1v1h-1zM613 497h2v1h-2zM606 504h1v1h-1zM615 500h2v1h-2zM607 510h3v1h-3zM620 502h2v1h-2zM622 501h2v1h-2zM630 495h2v1h-2zM645 486h1v1h-1zM654 482h1v1h-1zM655 481h1v1h-1zM613 516h1v1h-1zM616 512h1v1h-1zM623 511h2v1h-2zM629 505h1v1h-1zM656 487h1v1h-1zM650 495h1v1h-1zM669 488h1v1h-1zM638 513h3v1h-3zM657 498h3v1h-3zM666 494h1v1h-1zM659 501h3v1h-3zM670 494h1v1h-1zM671 506h1v1h-1zM659 543h1v1h-1zM655 550h1v1h-1zM664 548h3v1h-3zM651 578h1v1h-1zM530 604h1v1h-1zM538 620h2v1h-2zM734 457h1v1h-1zM729 469h1v1h-1zM688 507h2v1h-2zM736 466h1v1h-1zM692 508h1v1h-1zM704 498h1v1h-1zM707 494h1v1h-1zM735 470h3v1h-3zM744 463h1v1h-1zM706 503h1v1h-1zM736 478h1v1h-1zM707 505h1v1h-1zM716 498h2v1h-2zM718 497h1v1h-1zM731 485h1v1h-1zM714 503h1v1h-1zM723 497h2v1h-2zM728 493h1v1h-1zM730 490h1v1h-1zM738 483h3v1h-3zM727 494h1v1h-1zM744 481h1v1h-1zM713 511h2v1h-2zM717 510h1v1h-1zM723 503h1v1h-1zM735 494h1v1h-1zM679 515h1v1h-1zM684 510h1v1h-1zM674 522h2v1h-2zM683 515h1v1h-1zM677 523h1v1h-1zM675 529h2v1h-2zM679 525h3v1h-3zM690 517h1v1h-1zM692 523h1v1h-1zM681 534h2v1h-2zM698 525h1v1h-1zM687 540h3v1h-3zM689 539h3v1h-3zM695 535h1v1h-1zM696 547h1v1h-1zM767 478h2v1h-2zM774 484h2v1h-2zM764 480h1v1h-1zM763 483h2v1h-2zM751 478h2v1h-2zM757 485h2v1h-2zM711 543h1v1h-1zM717 541h2v1h-2zM717 543h2v1h-2zM720 545h1v1h-1zM734 548h1v1h-1zM679 569h1v1h-1zM571 603h2v1h-2zM541 618h1v1h-1zM542 623h1v1h-1zM549 628h2v1h-2zM518 629h1v1h-1zM526 676h3v1h-3zM527 681h1v1h-1zM461 644h2v5h-2zM443 660h2v1h-2zM482 595h2v1h-2zM488 702h4v2h-4zM556 615h6v7h-6zM576 630h1v1h-1zM630 576h9v3h-9zM612 589h3v5h-3zM626 588h3v2h-3zM557 616h4v6h-4zM638 589h2v1h-2zM646 601h2v1h-2zM659 599h2v1h-2zM661 599h2v1h-2zM663 598h2v1h-2zM665 597h2v1h-2zM666 597h2v1h-2zM668 596h2v1h-2zM670 595h2v1h-2zM672 595h2v1h-2zM640 696h7v4h-7zM637 701h2v1h-2zM482 594h2v2h-2zM461 644h3v5h-3zM443 659h2v1h-2zM864 436h2v1h-2zM936 494h3v1h-3zM457 822h8v1h-8zM451 827h4v1h-4zM464 817h4v1h-4zM489 702h3v2h-3z" fill="#c9413d" shape-rendering="crispEdges"/>
<path d="M582.1 744.2 l11 -4 q4 1 4 4 l-6 7 q-3 3 -8 0 q-4 -3 -1 -7z" fill="#232323"/>
</g></svg>
</body></html>
